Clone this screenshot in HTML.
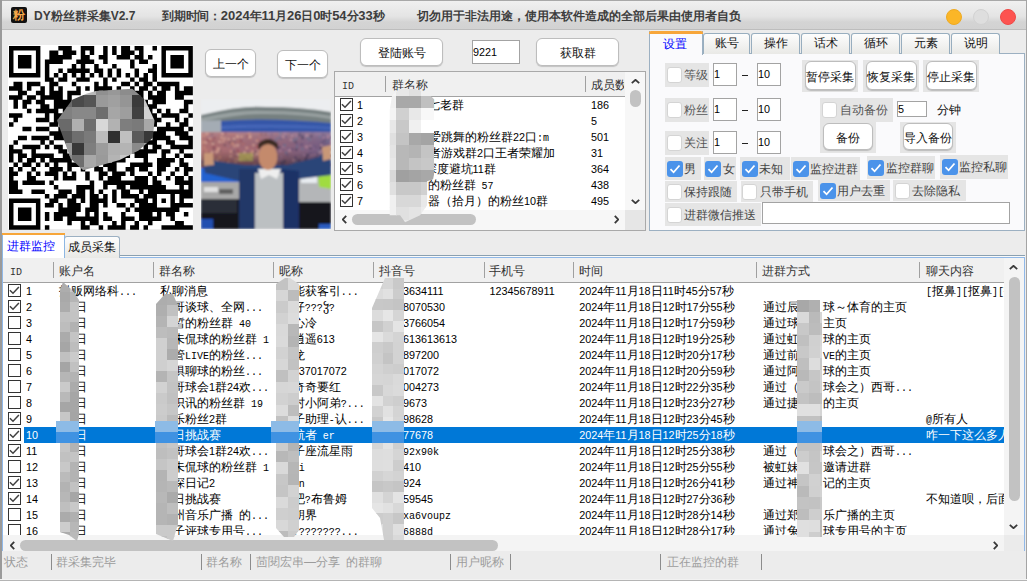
<!DOCTYPE html><html><head><meta charset="utf-8"><style>
*{box-sizing:border-box;margin:0;padding:0}
html,body{width:1027px;height:581px;overflow:hidden}
body{position:relative;background:#ececec;font-family:"Liberation Sans",sans-serif;font-size:12px;color:#000}
.abs{position:absolute}
.t{position:absolute;white-space:nowrap;line-height:16px}
.btn{position:absolute;background:#fff;border:1px solid #bdbdbd;border-radius:6px;box-shadow:0 1px 1px rgba(0,0,0,.18);text-align:center;font-size:12px;color:#111}
.inp{position:absolute;background:#fff;border:1px solid #a3a3a3}
.cb{position:absolute;width:13px;height:13px;border:1px solid #333;background:#fff}
.gb{position:absolute;background:#e5e5e5}
.rcb{position:absolute;width:15px;height:16px;border:1px solid #d4d4d4;border-radius:3px;background:#fff}
.rcbc{position:absolute;width:16px;height:16px;border-radius:3px;background:#4b93ea}
.lbl{position:absolute;white-space:nowrap;font-size:12px;color:#333;line-height:16px}
.tab{position:absolute;border:1px solid #98aebf;border-bottom:none;border-radius:3px 3px 0 0;background:linear-gradient(#fdfdfd,#e9e9e6);text-align:center;font-size:12px;line-height:19px;color:#111}
.hd{position:absolute;white-space:nowrap;font-size:12px;color:#333;line-height:16px}
.sep{position:absolute;width:1px;background:#a0a0a0}
.a{font-size:10.8px}
.m{font-family:'Liberation Mono',monospace;font-size:10px}
.btn{white-space:nowrap}
</style></head><body>
<div class="abs" style="left:0;top:0;width:1027px;height:30px;background:linear-gradient(#f0f0f0,#e4e4e4 55%,#d4d4d4 75%,#d2d2d2);border-top:1px solid #a8a8a8;border-bottom:1px solid #bdbdbd"></div>
<div class="abs" style="left:0;top:0;width:1.5px;height:581px;background:#9a9a9a"></div>
<div class="abs" style="left:1026px;top:0;width:1px;height:581px;background:#a4a4a4"></div>
<div class="abs" style="left:0;top:579px;width:1027px;height:1px;background:#f2f2f2"></div><div class="abs" style="left:0;top:580px;width:1027px;height:1px;background:#b4b4b4"></div>
<div class="abs" style="left:11px;top:7px;width:16px;height:16px;background:#111;border-radius:2px;color:#f5a94a;font-size:12px;font-weight:bold;line-height:16px;text-align:center">粉</div>
<div class="t" style="left:34px;top:8px;font-size:12px;font-weight:bold;color:#3d3d3d">DY粉丝群采集V2.7</div>
<div class="t" style="left:162px;top:8px;font-size:12px;letter-spacing:-0.25px;font-weight:bold;color:#3d3d3d">到期时间：<span style="font-size:13px;letter-spacing:0">2024</span>年<span style="font-size:13px;letter-spacing:0">11</span>月<span style="font-size:13px;letter-spacing:0">26</span>日<span style="font-size:13px;letter-spacing:0">0</span>时<span style="font-size:13px;letter-spacing:0">54</span>分<span style="font-size:13px;letter-spacing:0">33</span>秒</div>
<div class="t" style="left:417px;top:8px;font-size:12px;font-weight:bold;color:#3d3d3d">切勿用于非法用途，使用本软件造成的全部后果由使用者自负</div>
<div class="abs" style="left:946px;top:9px;width:16px;height:16px;border-radius:50%;background:#fbb627;border:1px solid #eeaa22"></div>
<div class="abs" style="left:973px;top:9px;width:16px;height:16px;border-radius:50%;background:#dedede;border:1px solid #d2d2d2"></div>
<div class="abs" style="left:1000px;top:9px;width:16px;height:16px;border-radius:50%;background:#fd5350;border:1px solid #ef4a47"></div>
<div class="abs" style="left:7.5px;top:44.8px;width:185.5px;height:184.5px;background:#fff"></div>
<svg class="abs" style="left:8.96px;top:46.06px" width="183.844" height="183.844" viewBox="0 0 41 41"><path d="M0 0h1v1h-1zM1 0h1v1h-1zM2 0h1v1h-1zM3 0h1v1h-1zM4 0h1v1h-1zM5 0h1v1h-1zM6 0h1v1h-1zM11 0h1v1h-1zM12 0h1v1h-1zM13 0h1v1h-1zM16 0h1v1h-1zM17 0h1v1h-1zM18 0h1v1h-1zM21 0h1v1h-1zM23 0h1v1h-1zM25 0h1v1h-1zM26 0h1v1h-1zM28 0h1v1h-1zM29 0h1v1h-1zM32 0h1v1h-1zM34 0h1v1h-1zM35 0h1v1h-1zM36 0h1v1h-1zM37 0h1v1h-1zM38 0h1v1h-1zM39 0h1v1h-1zM40 0h1v1h-1zM0 1h1v1h-1zM6 1h1v1h-1zM9 1h1v1h-1zM10 1h1v1h-1zM12 1h1v1h-1zM13 1h1v1h-1zM14 1h1v1h-1zM16 1h1v1h-1zM18 1h1v1h-1zM21 1h1v1h-1zM23 1h1v1h-1zM25 1h1v1h-1zM26 1h1v1h-1zM27 1h1v1h-1zM29 1h1v1h-1zM34 1h1v1h-1zM40 1h1v1h-1zM0 2h1v1h-1zM2 2h1v1h-1zM3 2h1v1h-1zM4 2h1v1h-1zM6 2h1v1h-1zM9 2h1v1h-1zM10 2h1v1h-1zM11 2h1v1h-1zM12 2h1v1h-1zM13 2h1v1h-1zM16 2h1v1h-1zM17 2h1v1h-1zM20 2h1v1h-1zM21 2h1v1h-1zM24 2h1v1h-1zM25 2h1v1h-1zM26 2h1v1h-1zM28 2h1v1h-1zM29 2h1v1h-1zM31 2h1v1h-1zM34 2h1v1h-1zM36 2h1v1h-1zM37 2h1v1h-1zM38 2h1v1h-1zM40 2h1v1h-1zM0 3h1v1h-1zM2 3h1v1h-1zM3 3h1v1h-1zM4 3h1v1h-1zM6 3h1v1h-1zM8 3h1v1h-1zM9 3h1v1h-1zM10 3h1v1h-1zM11 3h1v1h-1zM15 3h1v1h-1zM16 3h1v1h-1zM17 3h1v1h-1zM18 3h1v1h-1zM21 3h1v1h-1zM27 3h1v1h-1zM29 3h1v1h-1zM30 3h1v1h-1zM34 3h1v1h-1zM36 3h1v1h-1zM37 3h1v1h-1zM38 3h1v1h-1zM40 3h1v1h-1zM0 4h1v1h-1zM2 4h1v1h-1zM3 4h1v1h-1zM4 4h1v1h-1zM6 4h1v1h-1zM8 4h1v1h-1zM14 4h1v1h-1zM16 4h1v1h-1zM19 4h1v1h-1zM23 4h1v1h-1zM27 4h1v1h-1zM32 4h1v1h-1zM34 4h1v1h-1zM36 4h1v1h-1zM37 4h1v1h-1zM38 4h1v1h-1zM40 4h1v1h-1zM0 5h1v1h-1zM6 5h1v1h-1zM8 5h1v1h-1zM11 5h1v1h-1zM13 5h1v1h-1zM14 5h1v1h-1zM15 5h1v1h-1zM16 5h1v1h-1zM17 5h1v1h-1zM19 5h1v1h-1zM20 5h1v1h-1zM22 5h1v1h-1zM24 5h1v1h-1zM28 5h1v1h-1zM31 5h1v1h-1zM32 5h1v1h-1zM34 5h1v1h-1zM40 5h1v1h-1zM0 6h1v1h-1zM1 6h1v1h-1zM2 6h1v1h-1zM3 6h1v1h-1zM4 6h1v1h-1zM5 6h1v1h-1zM6 6h1v1h-1zM8 6h1v1h-1zM10 6h1v1h-1zM12 6h1v1h-1zM14 6h1v1h-1zM16 6h1v1h-1zM18 6h1v1h-1zM20 6h1v1h-1zM22 6h1v1h-1zM24 6h1v1h-1zM26 6h1v1h-1zM28 6h1v1h-1zM30 6h1v1h-1zM32 6h1v1h-1zM34 6h1v1h-1zM35 6h1v1h-1zM36 6h1v1h-1zM37 6h1v1h-1zM38 6h1v1h-1zM39 6h1v1h-1zM40 6h1v1h-1zM8 7h1v1h-1zM9 7h1v1h-1zM11 7h1v1h-1zM12 7h1v1h-1zM15 7h1v1h-1zM16 7h1v1h-1zM17 7h1v1h-1zM21 7h1v1h-1zM23 7h1v1h-1zM27 7h1v1h-1zM29 7h1v1h-1zM30 7h1v1h-1zM32 7h1v1h-1zM1 8h1v1h-1zM2 8h1v1h-1zM4 8h1v1h-1zM5 8h1v1h-1zM6 8h1v1h-1zM9 8h1v1h-1zM10 8h1v1h-1zM14 8h1v1h-1zM19 8h1v1h-1zM21 8h1v1h-1zM25 8h1v1h-1zM26 8h1v1h-1zM28 8h1v1h-1zM30 8h1v1h-1zM31 8h1v1h-1zM33 8h1v1h-1zM34 8h1v1h-1zM35 8h1v1h-1zM36 8h1v1h-1zM37 8h1v1h-1zM0 9h1v1h-1zM1 9h1v1h-1zM2 9h1v1h-1zM4 9h1v1h-1zM7 9h1v1h-1zM9 9h1v1h-1zM11 9h1v1h-1zM15 9h1v1h-1zM17 9h1v1h-1zM19 9h1v1h-1zM20 9h1v1h-1zM21 9h1v1h-1zM22 9h1v1h-1zM24 9h1v1h-1zM27 9h1v1h-1zM29 9h1v1h-1zM30 9h1v1h-1zM32 9h1v1h-1zM34 9h1v1h-1zM35 9h1v1h-1zM37 9h1v1h-1zM39 9h1v1h-1zM40 9h1v1h-1zM2 10h1v1h-1zM3 10h1v1h-1zM6 10h1v1h-1zM7 10h1v1h-1zM9 10h1v1h-1zM10 10h1v1h-1zM11 10h1v1h-1zM13 10h1v1h-1zM14 10h1v1h-1zM15 10h1v1h-1zM19 10h1v1h-1zM21 10h1v1h-1zM25 10h1v1h-1zM26 10h1v1h-1zM27 10h1v1h-1zM28 10h1v1h-1zM29 10h1v1h-1zM31 10h1v1h-1zM33 10h1v1h-1zM34 10h1v1h-1zM37 10h1v1h-1zM38 10h1v1h-1zM39 10h1v1h-1zM40 10h1v1h-1zM0 11h1v1h-1zM1 11h1v1h-1zM2 11h1v1h-1zM4 11h1v1h-1zM5 11h1v1h-1zM7 11h1v1h-1zM8 11h1v1h-1zM9 11h1v1h-1zM10 11h1v1h-1zM11 11h1v1h-1zM13 11h1v1h-1zM17 11h1v1h-1zM19 11h1v1h-1zM21 11h1v1h-1zM24 11h1v1h-1zM25 11h1v1h-1zM26 11h1v1h-1zM27 11h1v1h-1zM28 11h1v1h-1zM29 11h1v1h-1zM31 11h1v1h-1zM32 11h1v1h-1zM33 11h1v1h-1zM34 11h1v1h-1zM37 11h1v1h-1zM38 11h1v1h-1zM1 12h1v1h-1zM3 12h1v1h-1zM4 12h1v1h-1zM6 12h1v1h-1zM7 12h1v1h-1zM10 12h1v1h-1zM11 12h1v1h-1zM12 12h1v1h-1zM13 12h1v1h-1zM15 12h1v1h-1zM17 12h1v1h-1zM18 12h1v1h-1zM19 12h1v1h-1zM20 12h1v1h-1zM21 12h1v1h-1zM22 12h1v1h-1zM23 12h1v1h-1zM24 12h1v1h-1zM25 12h1v1h-1zM26 12h1v1h-1zM28 12h1v1h-1zM29 12h1v1h-1zM30 12h1v1h-1zM32 12h1v1h-1zM33 12h1v1h-1zM34 12h1v1h-1zM39 12h1v1h-1zM40 12h1v1h-1zM1 13h1v1h-1zM3 13h1v1h-1zM7 13h1v1h-1zM8 13h1v1h-1zM10 13h1v1h-1zM11 13h1v1h-1zM12 13h1v1h-1zM13 13h1v1h-1zM16 13h1v1h-1zM17 13h1v1h-1zM18 13h1v1h-1zM19 13h1v1h-1zM20 13h1v1h-1zM21 13h1v1h-1zM23 13h1v1h-1zM24 13h1v1h-1zM26 13h1v1h-1zM27 13h1v1h-1zM28 13h1v1h-1zM29 13h1v1h-1zM30 13h1v1h-1zM31 13h1v1h-1zM32 13h1v1h-1zM39 13h1v1h-1zM4 14h1v1h-1zM6 14h1v1h-1zM7 14h1v1h-1zM8 14h1v1h-1zM9 14h1v1h-1zM10 14h1v1h-1zM12 14h1v1h-1zM13 14h1v1h-1zM16 14h1v1h-1zM17 14h1v1h-1zM18 14h1v1h-1zM19 14h1v1h-1zM23 14h1v1h-1zM24 14h1v1h-1zM25 14h1v1h-1zM26 14h1v1h-1zM27 14h1v1h-1zM31 14h1v1h-1zM33 14h1v1h-1zM35 14h1v1h-1zM38 14h1v1h-1zM39 14h1v1h-1zM0 15h1v1h-1zM1 15h1v1h-1zM2 15h1v1h-1zM8 15h1v1h-1zM10 15h1v1h-1zM11 15h1v1h-1zM13 15h1v1h-1zM15 15h1v1h-1zM17 15h1v1h-1zM18 15h1v1h-1zM19 15h1v1h-1zM20 15h1v1h-1zM22 15h1v1h-1zM24 15h1v1h-1zM25 15h1v1h-1zM26 15h1v1h-1zM31 15h1v1h-1zM32 15h1v1h-1zM34 15h1v1h-1zM35 15h1v1h-1zM36 15h1v1h-1zM37 15h1v1h-1zM40 15h1v1h-1zM1 16h1v1h-1zM6 16h1v1h-1zM7 16h1v1h-1zM8 16h1v1h-1zM10 16h1v1h-1zM11 16h1v1h-1zM12 16h1v1h-1zM13 16h1v1h-1zM14 16h1v1h-1zM15 16h1v1h-1zM16 16h1v1h-1zM18 16h1v1h-1zM26 16h1v1h-1zM30 16h1v1h-1zM31 16h1v1h-1zM32 16h1v1h-1zM33 16h1v1h-1zM37 16h1v1h-1zM39 16h1v1h-1zM0 17h1v1h-1zM9 17h1v1h-1zM10 17h1v1h-1zM12 17h1v1h-1zM15 17h1v1h-1zM16 17h1v1h-1zM17 17h1v1h-1zM18 17h1v1h-1zM23 17h1v1h-1zM24 17h1v1h-1zM28 17h1v1h-1zM30 17h1v1h-1zM31 17h1v1h-1zM32 17h1v1h-1zM35 17h1v1h-1zM38 17h1v1h-1zM39 17h1v1h-1zM3 18h1v1h-1zM4 18h1v1h-1zM6 18h1v1h-1zM7 18h1v1h-1zM8 18h1v1h-1zM11 18h1v1h-1zM12 18h1v1h-1zM13 18h1v1h-1zM16 18h1v1h-1zM17 18h1v1h-1zM22 18h1v1h-1zM23 18h1v1h-1zM26 18h1v1h-1zM30 18h1v1h-1zM33 18h1v1h-1zM34 18h1v1h-1zM35 18h1v1h-1zM36 18h1v1h-1zM37 18h1v1h-1zM38 18h1v1h-1zM40 18h1v1h-1zM9 19h1v1h-1zM10 19h1v1h-1zM11 19h1v1h-1zM12 19h1v1h-1zM13 19h1v1h-1zM14 19h1v1h-1zM17 19h1v1h-1zM18 19h1v1h-1zM20 19h1v1h-1zM21 19h1v1h-1zM23 19h1v1h-1zM25 19h1v1h-1zM28 19h1v1h-1zM31 19h1v1h-1zM32 19h1v1h-1zM33 19h1v1h-1zM34 19h1v1h-1zM37 19h1v1h-1zM38 19h1v1h-1zM39 19h1v1h-1zM2 20h1v1h-1zM3 20h1v1h-1zM5 20h1v1h-1zM6 20h1v1h-1zM7 20h1v1h-1zM8 20h1v1h-1zM10 20h1v1h-1zM11 20h1v1h-1zM12 20h1v1h-1zM13 20h1v1h-1zM16 20h1v1h-1zM18 20h1v1h-1zM19 20h1v1h-1zM21 20h1v1h-1zM23 20h1v1h-1zM24 20h1v1h-1zM25 20h1v1h-1zM26 20h1v1h-1zM27 20h1v1h-1zM28 20h1v1h-1zM29 20h1v1h-1zM30 20h1v1h-1zM32 20h1v1h-1zM33 20h1v1h-1zM34 20h1v1h-1zM35 20h1v1h-1zM38 20h1v1h-1zM39 20h1v1h-1zM40 20h1v1h-1zM1 21h1v1h-1zM7 21h1v1h-1zM9 21h1v1h-1zM13 21h1v1h-1zM17 21h1v1h-1zM19 21h1v1h-1zM22 21h1v1h-1zM23 21h1v1h-1zM24 21h1v1h-1zM25 21h1v1h-1zM26 21h1v1h-1zM28 21h1v1h-1zM29 21h1v1h-1zM30 21h1v1h-1zM31 21h1v1h-1zM32 21h1v1h-1zM35 21h1v1h-1zM36 21h1v1h-1zM40 21h1v1h-1zM0 22h1v1h-1zM3 22h1v1h-1zM4 22h1v1h-1zM5 22h1v1h-1zM6 22h1v1h-1zM8 22h1v1h-1zM10 22h1v1h-1zM11 22h1v1h-1zM14 22h1v1h-1zM15 22h1v1h-1zM17 22h1v1h-1zM18 22h1v1h-1zM19 22h1v1h-1zM22 22h1v1h-1zM24 22h1v1h-1zM27 22h1v1h-1zM28 22h1v1h-1zM30 22h1v1h-1zM32 22h1v1h-1zM33 22h1v1h-1zM36 22h1v1h-1zM37 22h1v1h-1zM38 22h1v1h-1zM39 22h1v1h-1zM40 22h1v1h-1zM0 23h1v1h-1zM1 23h1v1h-1zM2 23h1v1h-1zM5 23h1v1h-1zM11 23h1v1h-1zM12 23h1v1h-1zM14 23h1v1h-1zM15 23h1v1h-1zM18 23h1v1h-1zM20 23h1v1h-1zM23 23h1v1h-1zM24 23h1v1h-1zM25 23h1v1h-1zM27 23h1v1h-1zM28 23h1v1h-1zM29 23h1v1h-1zM30 23h1v1h-1zM31 23h1v1h-1zM32 23h1v1h-1zM34 23h1v1h-1zM35 23h1v1h-1zM38 23h1v1h-1zM0 24h1v1h-1zM2 24h1v1h-1zM3 24h1v1h-1zM5 24h1v1h-1zM6 24h1v1h-1zM7 24h1v1h-1zM8 24h1v1h-1zM9 24h1v1h-1zM12 24h1v1h-1zM13 24h1v1h-1zM15 24h1v1h-1zM17 24h1v1h-1zM19 24h1v1h-1zM23 24h1v1h-1zM25 24h1v1h-1zM26 24h1v1h-1zM28 24h1v1h-1zM29 24h1v1h-1zM30 24h1v1h-1zM34 24h1v1h-1zM37 24h1v1h-1zM39 24h1v1h-1zM40 24h1v1h-1zM0 25h1v1h-1zM2 25h1v1h-1zM4 25h1v1h-1zM5 25h1v1h-1zM7 25h1v1h-1zM9 25h1v1h-1zM10 25h1v1h-1zM11 25h1v1h-1zM12 25h1v1h-1zM13 25h1v1h-1zM16 25h1v1h-1zM17 25h1v1h-1zM18 25h1v1h-1zM20 25h1v1h-1zM23 25h1v1h-1zM24 25h1v1h-1zM25 25h1v1h-1zM30 25h1v1h-1zM33 25h1v1h-1zM34 25h1v1h-1zM35 25h1v1h-1zM36 25h1v1h-1zM38 25h1v1h-1zM1 26h1v1h-1zM3 26h1v1h-1zM4 26h1v1h-1zM6 26h1v1h-1zM8 26h1v1h-1zM10 26h1v1h-1zM13 26h1v1h-1zM14 26h1v1h-1zM15 26h1v1h-1zM16 26h1v1h-1zM17 26h1v1h-1zM19 26h1v1h-1zM21 26h1v1h-1zM22 26h1v1h-1zM23 26h1v1h-1zM27 26h1v1h-1zM28 26h1v1h-1zM29 26h1v1h-1zM30 26h1v1h-1zM31 26h1v1h-1zM33 26h1v1h-1zM34 26h1v1h-1zM35 26h1v1h-1zM38 26h1v1h-1zM39 26h1v1h-1zM0 27h1v1h-1zM2 27h1v1h-1zM5 27h1v1h-1zM9 27h1v1h-1zM10 27h1v1h-1zM11 27h1v1h-1zM13 27h1v1h-1zM16 27h1v1h-1zM19 27h1v1h-1zM20 27h1v1h-1zM22 27h1v1h-1zM23 27h1v1h-1zM26 27h1v1h-1zM27 27h1v1h-1zM29 27h1v1h-1zM30 27h1v1h-1zM33 27h1v1h-1zM34 27h1v1h-1zM37 27h1v1h-1zM39 27h1v1h-1zM40 27h1v1h-1zM0 28h1v1h-1zM1 28h1v1h-1zM4 28h1v1h-1zM6 28h1v1h-1zM8 28h1v1h-1zM9 28h1v1h-1zM10 28h1v1h-1zM12 28h1v1h-1zM14 28h1v1h-1zM17 28h1v1h-1zM20 28h1v1h-1zM21 28h1v1h-1zM23 28h1v1h-1zM24 28h1v1h-1zM25 28h1v1h-1zM27 28h1v1h-1zM31 28h1v1h-1zM33 28h1v1h-1zM36 28h1v1h-1zM39 28h1v1h-1zM0 29h1v1h-1zM4 29h1v1h-1zM5 29h1v1h-1zM10 29h1v1h-1zM12 29h1v1h-1zM13 29h1v1h-1zM14 29h1v1h-1zM17 29h1v1h-1zM20 29h1v1h-1zM22 29h1v1h-1zM23 29h1v1h-1zM24 29h1v1h-1zM28 29h1v1h-1zM29 29h1v1h-1zM30 29h1v1h-1zM32 29h1v1h-1zM35 29h1v1h-1zM37 29h1v1h-1zM38 29h1v1h-1zM40 29h1v1h-1zM0 30h1v1h-1zM1 30h1v1h-1zM3 30h1v1h-1zM4 30h1v1h-1zM5 30h1v1h-1zM6 30h1v1h-1zM7 30h1v1h-1zM9 30h1v1h-1zM18 30h1v1h-1zM21 30h1v1h-1zM22 30h1v1h-1zM23 30h1v1h-1zM24 30h1v1h-1zM25 30h1v1h-1zM26 30h1v1h-1zM27 30h1v1h-1zM28 30h1v1h-1zM29 30h1v1h-1zM30 30h1v1h-1zM32 30h1v1h-1zM33 30h1v1h-1zM37 30h1v1h-1zM38 30h1v1h-1zM39 30h1v1h-1zM40 30h1v1h-1zM0 31h1v1h-1zM1 31h1v1h-1zM10 31h1v1h-1zM15 31h1v1h-1zM16 31h1v1h-1zM17 31h1v1h-1zM18 31h1v1h-1zM21 31h1v1h-1zM24 31h1v1h-1zM25 31h1v1h-1zM27 31h1v1h-1zM28 31h1v1h-1zM29 31h1v1h-1zM30 31h1v1h-1zM31 31h1v1h-1zM32 31h1v1h-1zM33 31h1v1h-1zM34 31h1v1h-1zM38 31h1v1h-1zM40 31h1v1h-1zM0 32h1v1h-1zM1 32h1v1h-1zM2 32h1v1h-1zM5 32h1v1h-1zM6 32h1v1h-1zM7 32h1v1h-1zM11 32h1v1h-1zM12 32h1v1h-1zM13 32h1v1h-1zM15 32h1v1h-1zM16 32h1v1h-1zM18 32h1v1h-1zM20 32h1v1h-1zM23 32h1v1h-1zM25 32h1v1h-1zM26 32h1v1h-1zM29 32h1v1h-1zM31 32h1v1h-1zM32 32h1v1h-1zM33 32h1v1h-1zM34 32h1v1h-1zM35 32h1v1h-1zM36 32h1v1h-1zM37 32h1v1h-1zM38 32h1v1h-1zM39 32h1v1h-1zM40 32h1v1h-1zM8 33h1v1h-1zM10 33h1v1h-1zM11 33h1v1h-1zM12 33h1v1h-1zM14 33h1v1h-1zM15 33h1v1h-1zM16 33h1v1h-1zM18 33h1v1h-1zM19 33h1v1h-1zM21 33h1v1h-1zM23 33h1v1h-1zM25 33h1v1h-1zM26 33h1v1h-1zM27 33h1v1h-1zM28 33h1v1h-1zM30 33h1v1h-1zM31 33h1v1h-1zM32 33h1v1h-1zM36 33h1v1h-1zM38 33h1v1h-1zM39 33h1v1h-1zM40 33h1v1h-1zM0 34h1v1h-1zM1 34h1v1h-1zM2 34h1v1h-1zM3 34h1v1h-1zM4 34h1v1h-1zM5 34h1v1h-1zM6 34h1v1h-1zM9 34h1v1h-1zM10 34h1v1h-1zM13 34h1v1h-1zM14 34h1v1h-1zM16 34h1v1h-1zM18 34h1v1h-1zM19 34h1v1h-1zM20 34h1v1h-1zM21 34h1v1h-1zM23 34h1v1h-1zM28 34h1v1h-1zM29 34h1v1h-1zM30 34h1v1h-1zM32 34h1v1h-1zM34 34h1v1h-1zM36 34h1v1h-1zM38 34h1v1h-1zM0 35h1v1h-1zM6 35h1v1h-1zM8 35h1v1h-1zM9 35h1v1h-1zM11 35h1v1h-1zM13 35h1v1h-1zM14 35h1v1h-1zM15 35h1v1h-1zM18 35h1v1h-1zM19 35h1v1h-1zM21 35h1v1h-1zM24 35h1v1h-1zM25 35h1v1h-1zM27 35h1v1h-1zM29 35h1v1h-1zM30 35h1v1h-1zM31 35h1v1h-1zM32 35h1v1h-1zM36 35h1v1h-1zM37 35h1v1h-1zM38 35h1v1h-1zM39 35h1v1h-1zM40 35h1v1h-1zM0 36h1v1h-1zM2 36h1v1h-1zM3 36h1v1h-1zM4 36h1v1h-1zM6 36h1v1h-1zM11 36h1v1h-1zM12 36h1v1h-1zM13 36h1v1h-1zM14 36h1v1h-1zM15 36h1v1h-1zM17 36h1v1h-1zM18 36h1v1h-1zM19 36h1v1h-1zM26 36h1v1h-1zM28 36h1v1h-1zM29 36h1v1h-1zM30 36h1v1h-1zM31 36h1v1h-1zM32 36h1v1h-1zM33 36h1v1h-1zM34 36h1v1h-1zM35 36h1v1h-1zM36 36h1v1h-1zM37 36h1v1h-1zM0 37h1v1h-1zM2 37h1v1h-1zM3 37h1v1h-1zM4 37h1v1h-1zM6 37h1v1h-1zM8 37h1v1h-1zM10 37h1v1h-1zM11 37h1v1h-1zM12 37h1v1h-1zM13 37h1v1h-1zM14 37h1v1h-1zM17 37h1v1h-1zM19 37h1v1h-1zM21 37h1v1h-1zM25 37h1v1h-1zM29 37h1v1h-1zM30 37h1v1h-1zM31 37h1v1h-1zM33 37h1v1h-1zM35 37h1v1h-1zM36 37h1v1h-1zM39 37h1v1h-1zM0 38h1v1h-1zM2 38h1v1h-1zM3 38h1v1h-1zM4 38h1v1h-1zM6 38h1v1h-1zM8 38h1v1h-1zM10 38h1v1h-1zM11 38h1v1h-1zM13 38h1v1h-1zM14 38h1v1h-1zM15 38h1v1h-1zM16 38h1v1h-1zM17 38h1v1h-1zM18 38h1v1h-1zM19 38h1v1h-1zM21 38h1v1h-1zM22 38h1v1h-1zM25 38h1v1h-1zM26 38h1v1h-1zM27 38h1v1h-1zM29 38h1v1h-1zM30 38h1v1h-1zM31 38h1v1h-1zM32 38h1v1h-1zM33 38h1v1h-1zM36 38h1v1h-1zM0 39h1v1h-1zM6 39h1v1h-1zM13 39h1v1h-1zM16 39h1v1h-1zM18 39h1v1h-1zM19 39h1v1h-1zM23 39h1v1h-1zM25 39h1v1h-1zM28 39h1v1h-1zM31 39h1v1h-1zM37 39h1v1h-1zM38 39h1v1h-1zM0 40h1v1h-1zM1 40h1v1h-1zM2 40h1v1h-1zM3 40h1v1h-1zM4 40h1v1h-1zM5 40h1v1h-1zM6 40h1v1h-1zM8 40h1v1h-1zM16 40h1v1h-1zM17 40h1v1h-1zM20 40h1v1h-1zM22 40h1v1h-1zM23 40h1v1h-1zM24 40h1v1h-1zM25 40h1v1h-1zM27 40h1v1h-1zM28 40h1v1h-1zM30 40h1v1h-1zM34 40h1v1h-1zM35 40h1v1h-1zM36 40h1v1h-1zM37 40h1v1h-1zM38 40h1v1h-1zM39 40h1v1h-1zM40 40h1v1h-1z" fill="#000"/></svg>
<div class="abs" style="left:47.8px;top:83px;width:120px;height:96px;clip-path:polygon(9.3px 37.4px,24.4px 16.8px,38.6px 10.8px,48.1px 8.1px,84.5px 5.7px,97.2px 16.8px,106.7px 37.4px,105.1px 54.8px,90.8px 67.5px,71.8px 77px,49.7px 83.3px,35.4px 87.3px,22.8px 75.4px,14.9px 53.2px)"><div style="position:absolute;left:36px;top:0px;width:12.5px;height:12.5px;background:#b8b8b8"></div><div style="position:absolute;left:48px;top:0px;width:12.5px;height:12.5px;background:#909090"></div><div style="position:absolute;left:60px;top:0px;width:12.5px;height:12.5px;background:#989898"></div><div style="position:absolute;left:72px;top:0px;width:12.5px;height:12.5px;background:#8c8c8c"></div><div style="position:absolute;left:84px;top:0px;width:12.5px;height:12.5px;background:#8a8a8a"></div><div style="position:absolute;left:12px;top:12px;width:12.5px;height:12.5px;background:#6a6a6a"></div><div style="position:absolute;left:24px;top:12px;width:12.5px;height:12.5px;background:#4a4a4a"></div><div style="position:absolute;left:36px;top:12px;width:12.5px;height:12.5px;background:#555555"></div><div style="position:absolute;left:48px;top:12px;width:12.5px;height:12.5px;background:#9a9a9a"></div><div style="position:absolute;left:60px;top:12px;width:12.5px;height:12.5px;background:#a0a0a0"></div><div style="position:absolute;left:72px;top:12px;width:12.5px;height:12.5px;background:#959595"></div><div style="position:absolute;left:84px;top:12px;width:12.5px;height:12.5px;background:#3a3a3a"></div><div style="position:absolute;left:96px;top:12px;width:12.5px;height:12.5px;background:#c8c8c8"></div><div style="position:absolute;left:0px;top:24px;width:12.5px;height:12.5px;background:#808080"></div><div style="position:absolute;left:12px;top:24px;width:12.5px;height:12.5px;background:#808080"></div><div style="position:absolute;left:24px;top:24px;width:12.5px;height:12.5px;background:#888888"></div><div style="position:absolute;left:36px;top:24px;width:12.5px;height:12.5px;background:#888888"></div><div style="position:absolute;left:48px;top:24px;width:12.5px;height:12.5px;background:#6e6e6e"></div><div style="position:absolute;left:60px;top:24px;width:12.5px;height:12.5px;background:#a6a6a6"></div><div style="position:absolute;left:72px;top:24px;width:12.5px;height:12.5px;background:#9e9e9e"></div><div style="position:absolute;left:84px;top:24px;width:12.5px;height:12.5px;background:#404040"></div><div style="position:absolute;left:96px;top:24px;width:12.5px;height:12.5px;background:#d2d2d2"></div><div style="position:absolute;left:0px;top:36px;width:12.5px;height:12.5px;background:#6a6a6a"></div><div style="position:absolute;left:12px;top:36px;width:12.5px;height:12.5px;background:#6a6a6a"></div><div style="position:absolute;left:24px;top:36px;width:12.5px;height:12.5px;background:#b0b0b0"></div><div style="position:absolute;left:36px;top:36px;width:12.5px;height:12.5px;background:#6e6e6e"></div><div style="position:absolute;left:48px;top:36px;width:12.5px;height:12.5px;background:#d8d8d8"></div><div style="position:absolute;left:60px;top:36px;width:12.5px;height:12.5px;background:#b2b2b2"></div><div style="position:absolute;left:72px;top:36px;width:12.5px;height:12.5px;background:#7e7e7e"></div><div style="position:absolute;left:84px;top:36px;width:12.5px;height:12.5px;background:#7a7a7a"></div><div style="position:absolute;left:96px;top:36px;width:12.5px;height:12.5px;background:#a8a8a8"></div><div style="position:absolute;left:0px;top:48px;width:12.5px;height:12.5px;background:#555555"></div><div style="position:absolute;left:12px;top:48px;width:12.5px;height:12.5px;background:#555555"></div><div style="position:absolute;left:24px;top:48px;width:12.5px;height:12.5px;background:#6e6e6e"></div><div style="position:absolute;left:36px;top:48px;width:12.5px;height:12.5px;background:#7a7a7a"></div><div style="position:absolute;left:48px;top:48px;width:12.5px;height:12.5px;background:#bcbcbc"></div><div style="position:absolute;left:60px;top:48px;width:12.5px;height:12.5px;background:#303030"></div><div style="position:absolute;left:72px;top:48px;width:12.5px;height:12.5px;background:#c0c0c0"></div><div style="position:absolute;left:84px;top:48px;width:12.5px;height:12.5px;background:#5a5a5a"></div><div style="position:absolute;left:96px;top:48px;width:12.5px;height:12.5px;background:#383838"></div><div style="position:absolute;left:12px;top:60px;width:12.5px;height:12.5px;background:#9a9a9a"></div><div style="position:absolute;left:24px;top:60px;width:12.5px;height:12.5px;background:#383838"></div><div style="position:absolute;left:36px;top:60px;width:12.5px;height:12.5px;background:#7e7e7e"></div><div style="position:absolute;left:48px;top:60px;width:12.5px;height:12.5px;background:#9c9c9c"></div><div style="position:absolute;left:60px;top:60px;width:12.5px;height:12.5px;background:#b0b0b0"></div><div style="position:absolute;left:72px;top:60px;width:12.5px;height:12.5px;background:#b4b4b4"></div><div style="position:absolute;left:84px;top:60px;width:12.5px;height:12.5px;background:#8a8a8a"></div><div style="position:absolute;left:96px;top:60px;width:12.5px;height:12.5px;background:#a0a0a0"></div><div style="position:absolute;left:12px;top:72px;width:12.5px;height:12.5px;background:#8a8a8a"></div><div style="position:absolute;left:24px;top:72px;width:12.5px;height:12.5px;background:#6e6e6e"></div><div style="position:absolute;left:36px;top:72px;width:12.5px;height:12.5px;background:#a8a8a8"></div><div style="position:absolute;left:48px;top:72px;width:12.5px;height:12.5px;background:#9a9a9a"></div><div style="position:absolute;left:60px;top:72px;width:12.5px;height:12.5px;background:#b4b4b4"></div><div style="position:absolute;left:72px;top:72px;width:12.5px;height:12.5px;background:#c8c8c8"></div><div style="position:absolute;left:24px;top:84px;width:12.5px;height:12.5px;background:#9a9a9a"></div><div style="position:absolute;left:36px;top:84px;width:12.5px;height:12.5px;background:#9a9a9a"></div><div style="position:absolute;left:48px;top:84px;width:12.5px;height:12.5px;background:#a0a0a0"></div></div>
<div class="btn" style="left:205px;top:49px;width:51px;height:28px;line-height:28px">上一个</div>
<div class="btn" style="left:277px;top:50px;width:51px;height:28px;line-height:28px">下一个</div>
<svg class="abs" style="left:201px;top:99px" width="130" height="130" viewBox="0 0 130 130">
<defs><filter id="bl"><feGaussianBlur stdDeviation="0.8"/></filter>
<linearGradient id="cv" x1="0" y1="0" x2="0" y2="1"><stop offset="0" stop-color="#fff" stop-opacity="0.15"/><stop offset="0.5" stop-color="#000" stop-opacity="0"/><stop offset="1" stop-color="#000" stop-opacity="0.45"/></linearGradient>
<linearGradient id="ch" x1="0" y1="0" x2="1" y2="0"><stop offset="0" stop-color="#b07070"/><stop offset="0.5" stop-color="#9a6878"/><stop offset="1" stop-color="#766088"/></linearGradient></defs>
<g filter="url(#bl)">
<rect width="130" height="130" fill="#eceef0"/>
<path d="M0 16 Q40 6 65 8 Q100 8 130 13 L130 28 L0 30 Z" fill="#768080"/>
<path d="M0 19 Q40 10 65 12 Q100 12 130 17 L130 20 Q100 15 65 15 Q40 14 0 23 Z" fill="#9aa2a2"/>
<path d="M0 22 L20 21 L20 34 L0 34 Z" fill="#a4acb4"/>
<path d="M20 22 Q65 18 130 24 L130 34 L20 34 Z" fill="#3556a8"/>
<path d="M20 27 Q65 24 130 28 L130 30 Q65 27 20 30 Z" fill="#5070c0" opacity="0.7"/>
<rect x="0" y="33" width="130" height="36" fill="url(#ch)"/>
<rect x="58.8" y="52.6" width="2.5" height="2.5" fill="#7a5060" opacity="0.75"/><rect x="60.5" y="50.8" width="2.5" height="2.5" fill="#a07080" opacity="0.75"/><rect x="24.7" y="61.1" width="2.5" height="2.5" fill="#904858" opacity="0.75"/><rect x="81.9" y="60.8" width="2.5" height="2.5" fill="#8a6a90" opacity="0.75"/><rect x="58.1" y="38.0" width="2.5" height="2.5" fill="#a07080" opacity="0.75"/><rect x="105.3" y="57.3" width="2.5" height="2.5" fill="#8a6a90" opacity="0.75"/><rect x="77.4" y="46.9" width="2.5" height="2.5" fill="#5a4a70" opacity="0.75"/><rect x="85.0" y="54.5" width="2.5" height="2.5" fill="#705a80" opacity="0.75"/><rect x="81.0" y="62.1" width="2.5" height="2.5" fill="#8a6a90" opacity="0.75"/><rect x="7.7" y="39.7" width="2.5" height="2.5" fill="#b06a68" opacity="0.75"/><rect x="78.0" y="60.2" width="2.5" height="2.5" fill="#a07898" opacity="0.75"/><rect x="57.3" y="62.5" width="2.5" height="2.5" fill="#a07080" opacity="0.75"/><rect x="30.4" y="43.3" width="2.5" height="2.5" fill="#c88878" opacity="0.75"/><rect x="86.1" y="49.0" width="2.5" height="2.5" fill="#a07898" opacity="0.75"/><rect x="52.9" y="52.3" width="2.5" height="2.5" fill="#7a5060" opacity="0.75"/><rect x="10.8" y="41.9" width="2.5" height="2.5" fill="#7a5060" opacity="0.75"/><rect x="29.9" y="43.1" width="2.5" height="2.5" fill="#c88878" opacity="0.75"/><rect x="73.2" y="36.8" width="2.5" height="2.5" fill="#8a6a90" opacity="0.75"/><rect x="110.1" y="46.5" width="2.5" height="2.5" fill="#8a6a90" opacity="0.75"/><rect x="110.2" y="33.0" width="2.5" height="2.5" fill="#705a80" opacity="0.75"/><rect x="120.5" y="34.8" width="2.5" height="2.5" fill="#5a4a70" opacity="0.75"/><rect x="127.4" y="46.9" width="2.5" height="2.5" fill="#8a6a90" opacity="0.75"/><rect x="73.6" y="39.9" width="2.5" height="2.5" fill="#6a7090" opacity="0.75"/><rect x="35.1" y="36.1" width="2.5" height="2.5" fill="#d8a090" opacity="0.75"/><rect x="2.0" y="47.4" width="2.5" height="2.5" fill="#c88878" opacity="0.75"/><rect x="17.5" y="57.7" width="2.5" height="2.5" fill="#c88878" opacity="0.75"/><rect x="7.8" y="60.9" width="2.5" height="2.5" fill="#b06a68" opacity="0.75"/><rect x="88.7" y="39.6" width="2.5" height="2.5" fill="#c090a0" opacity="0.75"/><rect x="24.8" y="58.6" width="2.5" height="2.5" fill="#b06a68" opacity="0.75"/><rect x="54.5" y="46.4" width="2.5" height="2.5" fill="#904858" opacity="0.75"/><rect x="54.7" y="40.5" width="2.5" height="2.5" fill="#d8a090" opacity="0.75"/><rect x="112.4" y="67.1" width="2.5" height="2.5" fill="#c090a0" opacity="0.75"/><rect x="39.5" y="64.0" width="2.5" height="2.5" fill="#b06a68" opacity="0.75"/><rect x="24.3" y="67.9" width="2.5" height="2.5" fill="#a07080" opacity="0.75"/><rect x="83.4" y="36.5" width="2.5" height="2.5" fill="#705a80" opacity="0.75"/><rect x="27.7" y="42.0" width="2.5" height="2.5" fill="#7a5060" opacity="0.75"/><rect x="79.3" y="62.1" width="2.5" height="2.5" fill="#5a4a70" opacity="0.75"/><rect x="9.5" y="36.2" width="2.5" height="2.5" fill="#a07080" opacity="0.75"/><rect x="82.8" y="33.5" width="2.5" height="2.5" fill="#a07898" opacity="0.75"/><rect x="48.3" y="48.9" width="2.5" height="2.5" fill="#a07080" opacity="0.75"/><rect x="62.9" y="53.1" width="2.5" height="2.5" fill="#7a5060" opacity="0.75"/><rect x="50.2" y="55.0" width="2.5" height="2.5" fill="#d8a090" opacity="0.75"/><rect x="118.1" y="61.6" width="2.5" height="2.5" fill="#705a80" opacity="0.75"/><rect x="94.3" y="38.5" width="2.5" height="2.5" fill="#6a7090" opacity="0.75"/><rect x="122.3" y="39.9" width="2.5" height="2.5" fill="#5a4a70" opacity="0.75"/><rect x="114.7" y="54.1" width="2.5" height="2.5" fill="#5a4a70" opacity="0.75"/><rect x="6.2" y="36.8" width="2.5" height="2.5" fill="#a07080" opacity="0.75"/><rect x="125.1" y="41.3" width="2.5" height="2.5" fill="#6a7090" opacity="0.75"/><rect x="50.9" y="47.7" width="2.5" height="2.5" fill="#a07080" opacity="0.75"/><rect x="63.8" y="51.2" width="2.5" height="2.5" fill="#e0b0a0" opacity="0.75"/><rect x="127.0" y="37.4" width="2.5" height="2.5" fill="#5a4a70" opacity="0.75"/><rect x="72.7" y="62.8" width="2.5" height="2.5" fill="#c090a0" opacity="0.75"/><rect x="9.6" y="40.4" width="2.5" height="2.5" fill="#b06a68" opacity="0.75"/><rect x="97.4" y="35.4" width="2.5" height="2.5" fill="#5a4a70" opacity="0.75"/><rect x="57.9" y="35.1" width="2.5" height="2.5" fill="#b06a68" opacity="0.75"/><rect x="36.7" y="51.6" width="2.5" height="2.5" fill="#b06a68" opacity="0.75"/><rect x="12.0" y="37.8" width="2.5" height="2.5" fill="#904858" opacity="0.75"/><rect x="127.5" y="56.0" width="2.5" height="2.5" fill="#6a7090" opacity="0.75"/><rect x="67.9" y="66.1" width="2.5" height="2.5" fill="#c090a0" opacity="0.75"/><rect x="4.6" y="33.6" width="2.5" height="2.5" fill="#d8a090" opacity="0.75"/><rect x="91.1" y="66.7" width="2.5" height="2.5" fill="#8a6a90" opacity="0.75"/><rect x="77.8" y="35.6" width="2.5" height="2.5" fill="#8a6a90" opacity="0.75"/><rect x="95.0" y="44.2" width="2.5" height="2.5" fill="#8a6a90" opacity="0.75"/><rect x="9.8" y="52.1" width="2.5" height="2.5" fill="#e0b0a0" opacity="0.75"/><rect x="5.8" y="65.8" width="2.5" height="2.5" fill="#e0b0a0" opacity="0.75"/><rect x="91.5" y="60.8" width="2.5" height="2.5" fill="#a07898" opacity="0.75"/><rect x="45.7" y="57.0" width="2.5" height="2.5" fill="#c88878" opacity="0.75"/><rect x="113.2" y="47.6" width="2.5" height="2.5" fill="#483c5c" opacity="0.75"/><rect x="3.9" y="50.5" width="2.5" height="2.5" fill="#c88878" opacity="0.75"/><rect x="81.2" y="46.4" width="2.5" height="2.5" fill="#c090a0" opacity="0.75"/><rect x="1.6" y="35.5" width="2.5" height="2.5" fill="#c88878" opacity="0.75"/><rect x="83.1" y="67.8" width="2.5" height="2.5" fill="#5a4a70" opacity="0.75"/><rect x="94.7" y="46.6" width="2.5" height="2.5" fill="#6a7090" opacity="0.75"/><rect x="90.2" y="49.0" width="2.5" height="2.5" fill="#5a4a70" opacity="0.75"/><rect x="109.0" y="35.9" width="2.5" height="2.5" fill="#483c5c" opacity="0.75"/><rect x="66.9" y="43.9" width="2.5" height="2.5" fill="#8a6a90" opacity="0.75"/><rect x="62.5" y="41.1" width="2.5" height="2.5" fill="#e0b0a0" opacity="0.75"/><rect x="14.7" y="60.3" width="2.5" height="2.5" fill="#e0b0a0" opacity="0.75"/><rect x="119.7" y="42.0" width="2.5" height="2.5" fill="#8a6a90" opacity="0.75"/><rect x="47.8" y="38.0" width="2.5" height="2.5" fill="#a07080" opacity="0.75"/><rect x="26.3" y="38.9" width="2.5" height="2.5" fill="#d8a090" opacity="0.75"/><rect x="85.8" y="48.5" width="2.5" height="2.5" fill="#705a80" opacity="0.75"/><rect x="42.5" y="56.3" width="2.5" height="2.5" fill="#b06a68" opacity="0.75"/><rect x="82.4" y="61.1" width="2.5" height="2.5" fill="#483c5c" opacity="0.75"/><rect x="118.8" y="63.8" width="2.5" height="2.5" fill="#5a4a70" opacity="0.75"/><rect x="28.5" y="65.2" width="2.5" height="2.5" fill="#b06a68" opacity="0.75"/><rect x="17.7" y="50.4" width="2.5" height="2.5" fill="#7a5060" opacity="0.75"/><rect x="116.4" y="34.4" width="2.5" height="2.5" fill="#8a6a90" opacity="0.75"/><rect x="123.5" y="42.7" width="2.5" height="2.5" fill="#705a80" opacity="0.75"/><rect x="14.7" y="49.5" width="2.5" height="2.5" fill="#b06a68" opacity="0.75"/><rect x="108.0" y="46.4" width="2.5" height="2.5" fill="#c090a0" opacity="0.75"/><rect x="64.2" y="44.0" width="2.5" height="2.5" fill="#7a5060" opacity="0.75"/><rect x="109.4" y="54.9" width="2.5" height="2.5" fill="#a07898" opacity="0.75"/><rect x="9.7" y="34.1" width="2.5" height="2.5" fill="#7a5060" opacity="0.75"/><rect x="79.0" y="56.7" width="2.5" height="2.5" fill="#a07898" opacity="0.75"/><rect x="74.2" y="43.8" width="2.5" height="2.5" fill="#483c5c" opacity="0.75"/><rect x="73.3" y="55.4" width="2.5" height="2.5" fill="#5a4a70" opacity="0.75"/><rect x="59.1" y="33.9" width="2.5" height="2.5" fill="#7a5060" opacity="0.75"/><rect x="34.6" y="60.3" width="2.5" height="2.5" fill="#7a5060" opacity="0.75"/><rect x="6.1" y="55.0" width="2.5" height="2.5" fill="#904858" opacity="0.75"/><rect x="14.2" y="51.7" width="2.5" height="2.5" fill="#e0b0a0" opacity="0.75"/><rect x="105.0" y="66.5" width="2.5" height="2.5" fill="#6a7090" opacity="0.75"/><rect x="25.7" y="61.8" width="2.5" height="2.5" fill="#d8a090" opacity="0.75"/><rect x="23.2" y="33.4" width="2.5" height="2.5" fill="#904858" opacity="0.75"/><rect x="69.5" y="34.3" width="2.5" height="2.5" fill="#705a80" opacity="0.75"/><rect x="35.4" y="45.1" width="2.5" height="2.5" fill="#e0b0a0" opacity="0.75"/><rect x="123.1" y="50.5" width="2.5" height="2.5" fill="#483c5c" opacity="0.75"/><rect x="20.7" y="62.7" width="2.5" height="2.5" fill="#e0b0a0" opacity="0.75"/><rect x="117.8" y="36.1" width="2.5" height="2.5" fill="#6a7090" opacity="0.75"/><rect x="50.4" y="48.8" width="2.5" height="2.5" fill="#b06a68" opacity="0.75"/><rect x="81.3" y="64.8" width="2.5" height="2.5" fill="#5a4a70" opacity="0.75"/><rect x="71.5" y="55.8" width="2.5" height="2.5" fill="#c090a0" opacity="0.75"/><rect x="103.6" y="66.0" width="2.5" height="2.5" fill="#5a4a70" opacity="0.75"/><rect x="42.4" y="67.4" width="2.5" height="2.5" fill="#c88878" opacity="0.75"/><rect x="93.9" y="61.6" width="2.5" height="2.5" fill="#6a7090" opacity="0.75"/><rect x="120.1" y="37.3" width="2.5" height="2.5" fill="#705a80" opacity="0.75"/><rect x="117.0" y="67.3" width="2.5" height="2.5" fill="#a07898" opacity="0.75"/><rect x="69.8" y="60.7" width="2.5" height="2.5" fill="#a07898" opacity="0.75"/><rect x="34.0" y="58.1" width="2.5" height="2.5" fill="#c88878" opacity="0.75"/><rect x="45.3" y="35.9" width="2.5" height="2.5" fill="#904858" opacity="0.75"/><rect x="44.5" y="47.7" width="2.5" height="2.5" fill="#d8a090" opacity="0.75"/><rect x="63.4" y="34.0" width="2.5" height="2.5" fill="#7a5060" opacity="0.75"/><rect x="112.8" y="48.0" width="2.5" height="2.5" fill="#8a6a90" opacity="0.75"/><rect x="22.5" y="44.7" width="2.5" height="2.5" fill="#7a5060" opacity="0.75"/><rect x="119.1" y="49.5" width="2.5" height="2.5" fill="#c090a0" opacity="0.75"/><rect x="117.1" y="51.1" width="2.5" height="2.5" fill="#6a7090" opacity="0.75"/><rect x="89.6" y="66.1" width="2.5" height="2.5" fill="#5a4a70" opacity="0.75"/><rect x="75.3" y="57.1" width="2.5" height="2.5" fill="#483c5c" opacity="0.75"/><rect x="28.8" y="51.4" width="2.5" height="2.5" fill="#d8a090" opacity="0.75"/><rect x="108.1" y="52.7" width="2.5" height="2.5" fill="#705a80" opacity="0.75"/><rect x="68.0" y="62.5" width="2.5" height="2.5" fill="#c090a0" opacity="0.75"/><rect x="33.3" y="56.5" width="2.5" height="2.5" fill="#7a5060" opacity="0.75"/><rect x="113.1" y="54.3" width="2.5" height="2.5" fill="#a07898" opacity="0.75"/><rect x="110.6" y="66.9" width="2.5" height="2.5" fill="#c090a0" opacity="0.75"/><rect x="35.5" y="50.4" width="2.5" height="2.5" fill="#904858" opacity="0.75"/><rect x="69.7" y="50.6" width="2.5" height="2.5" fill="#c090a0" opacity="0.75"/><rect x="49.0" y="51.8" width="2.5" height="2.5" fill="#c88878" opacity="0.75"/><rect x="67.1" y="47.0" width="2.5" height="2.5" fill="#483c5c" opacity="0.75"/><rect x="128.6" y="37.3" width="2.5" height="2.5" fill="#8a6a90" opacity="0.75"/><rect x="89.8" y="35.3" width="2.5" height="2.5" fill="#c090a0" opacity="0.75"/><rect x="59.7" y="65.2" width="2.5" height="2.5" fill="#7a5060" opacity="0.75"/><rect x="120.0" y="42.4" width="2.5" height="2.5" fill="#5a4a70" opacity="0.75"/><rect x="64.1" y="44.9" width="2.5" height="2.5" fill="#7a5060" opacity="0.75"/><rect x="121.6" y="65.2" width="2.5" height="2.5" fill="#c090a0" opacity="0.75"/><rect x="41.2" y="39.7" width="2.5" height="2.5" fill="#a07080" opacity="0.75"/><rect x="3.8" y="42.1" width="2.5" height="2.5" fill="#e0b0a0" opacity="0.75"/><rect x="101.3" y="33.8" width="2.5" height="2.5" fill="#705a80" opacity="0.75"/><rect x="20.2" y="33.4" width="2.5" height="2.5" fill="#d8a090" opacity="0.75"/><rect x="41.9" y="45.4" width="2.5" height="2.5" fill="#a07080" opacity="0.75"/><rect x="64.8" y="50.5" width="2.5" height="2.5" fill="#a07080" opacity="0.75"/><rect x="16.0" y="50.9" width="2.5" height="2.5" fill="#d8a090" opacity="0.75"/><rect x="93.3" y="57.5" width="2.5" height="2.5" fill="#5a4a70" opacity="0.75"/><rect x="3.0" y="55.2" width="2.5" height="2.5" fill="#7a5060" opacity="0.75"/><rect x="68.8" y="38.6" width="2.5" height="2.5" fill="#705a80" opacity="0.75"/><rect x="112.3" y="51.7" width="2.5" height="2.5" fill="#705a80" opacity="0.75"/><rect x="68.9" y="62.8" width="2.5" height="2.5" fill="#c090a0" opacity="0.75"/><rect x="76.3" y="37.8" width="2.5" height="2.5" fill="#6a7090" opacity="0.75"/><rect x="81.6" y="45.2" width="2.5" height="2.5" fill="#705a80" opacity="0.75"/><rect x="41.1" y="44.0" width="2.5" height="2.5" fill="#b06a68" opacity="0.75"/><rect x="28.4" y="67.9" width="2.5" height="2.5" fill="#c88878" opacity="0.75"/><rect x="17.4" y="41.4" width="2.5" height="2.5" fill="#e0b0a0" opacity="0.75"/><rect x="11.5" y="46.6" width="2.5" height="2.5" fill="#904858" opacity="0.75"/><rect x="108.2" y="47.8" width="2.5" height="2.5" fill="#483c5c" opacity="0.75"/><rect x="91.6" y="40.0" width="2.5" height="2.5" fill="#6a7090" opacity="0.75"/><rect x="89.1" y="33.6" width="2.5" height="2.5" fill="#705a80" opacity="0.75"/><rect x="74.1" y="45.5" width="2.5" height="2.5" fill="#483c5c" opacity="0.75"/><rect x="125.9" y="37.0" width="2.5" height="2.5" fill="#c090a0" opacity="0.75"/><rect x="82.5" y="45.0" width="2.5" height="2.5" fill="#6a7090" opacity="0.75"/><rect x="108.3" y="61.1" width="2.5" height="2.5" fill="#5a4a70" opacity="0.75"/><rect x="13.8" y="34.3" width="2.5" height="2.5" fill="#a07080" opacity="0.75"/><rect x="79.7" y="64.7" width="2.5" height="2.5" fill="#5a4a70" opacity="0.75"/><rect x="19.1" y="39.5" width="2.5" height="2.5" fill="#b06a68" opacity="0.75"/><rect x="22.4" y="38.5" width="2.5" height="2.5" fill="#d8a090" opacity="0.75"/><rect x="120.5" y="36.3" width="2.5" height="2.5" fill="#8a6a90" opacity="0.75"/><rect x="17.5" y="56.8" width="2.5" height="2.5" fill="#c88878" opacity="0.75"/><rect x="99.4" y="44.4" width="2.5" height="2.5" fill="#5a4a70" opacity="0.75"/><rect x="55.4" y="45.4" width="2.5" height="2.5" fill="#b06a68" opacity="0.75"/><rect x="78.1" y="33.5" width="2.5" height="2.5" fill="#6a7090" opacity="0.75"/><rect x="5.3" y="40.0" width="2.5" height="2.5" fill="#904858" opacity="0.75"/><rect x="59.0" y="58.9" width="2.5" height="2.5" fill="#904858" opacity="0.75"/><rect x="119.8" y="54.2" width="2.5" height="2.5" fill="#8a6a90" opacity="0.75"/><rect x="66.6" y="33.5" width="2.5" height="2.5" fill="#8a6a90" opacity="0.75"/><rect x="104.2" y="57.7" width="2.5" height="2.5" fill="#483c5c" opacity="0.75"/><rect x="118.1" y="65.9" width="2.5" height="2.5" fill="#c090a0" opacity="0.75"/><rect x="77.9" y="50.7" width="2.5" height="2.5" fill="#a07898" opacity="0.75"/><rect x="104.6" y="42.0" width="2.5" height="2.5" fill="#8a6a90" opacity="0.75"/><rect x="96.8" y="60.2" width="2.5" height="2.5" fill="#483c5c" opacity="0.75"/><rect x="121.4" y="37.7" width="2.5" height="2.5" fill="#a07898" opacity="0.75"/><rect x="114.4" y="57.3" width="2.5" height="2.5" fill="#483c5c" opacity="0.75"/><rect x="56.1" y="39.4" width="2.5" height="2.5" fill="#b06a68" opacity="0.75"/><rect x="93.9" y="35.5" width="2.5" height="2.5" fill="#a07898" opacity="0.75"/><rect x="39.2" y="36.5" width="2.5" height="2.5" fill="#d8a090" opacity="0.75"/><rect x="128.8" y="64.6" width="2.5" height="2.5" fill="#8a6a90" opacity="0.75"/><rect x="30.2" y="66.1" width="2.5" height="2.5" fill="#e0b0a0" opacity="0.75"/><rect x="38.9" y="40.6" width="2.5" height="2.5" fill="#904858" opacity="0.75"/><rect x="74.0" y="51.7" width="2.5" height="2.5" fill="#5a4a70" opacity="0.75"/><rect x="66.9" y="50.4" width="2.5" height="2.5" fill="#705a80" opacity="0.75"/><rect x="91.2" y="59.7" width="2.5" height="2.5" fill="#c090a0" opacity="0.75"/><rect x="3.0" y="54.5" width="2.5" height="2.5" fill="#e0b0a0" opacity="0.75"/><rect x="30.8" y="48.5" width="2.5" height="2.5" fill="#a07080" opacity="0.75"/><rect x="6.6" y="39.8" width="2.5" height="2.5" fill="#904858" opacity="0.75"/><rect x="1.4" y="42.0" width="2.5" height="2.5" fill="#d8a090" opacity="0.75"/><rect x="117.7" y="52.3" width="2.5" height="2.5" fill="#c090a0" opacity="0.75"/><rect x="54.0" y="51.2" width="2.5" height="2.5" fill="#7a5060" opacity="0.75"/><rect x="129.4" y="55.3" width="2.5" height="2.5" fill="#483c5c" opacity="0.75"/><rect x="83.8" y="52.2" width="2.5" height="2.5" fill="#6a7090" opacity="0.75"/><rect x="98.7" y="34.6" width="2.5" height="2.5" fill="#705a80" opacity="0.75"/><rect x="50.2" y="67.0" width="2.5" height="2.5" fill="#7a5060" opacity="0.75"/><rect x="64.4" y="54.4" width="2.5" height="2.5" fill="#c88878" opacity="0.75"/><rect x="55.8" y="50.3" width="2.5" height="2.5" fill="#d8a090" opacity="0.75"/><rect x="68.5" y="53.9" width="2.5" height="2.5" fill="#a07898" opacity="0.75"/><rect x="69.0" y="49.9" width="2.5" height="2.5" fill="#a07898" opacity="0.75"/><rect x="72.9" y="42.9" width="2.5" height="2.5" fill="#6a7090" opacity="0.75"/><rect x="97.2" y="33.9" width="2.5" height="2.5" fill="#483c5c" opacity="0.75"/><rect x="31.9" y="34.5" width="2.5" height="2.5" fill="#b06a68" opacity="0.75"/><rect x="53.1" y="57.0" width="2.5" height="2.5" fill="#c88878" opacity="0.75"/><rect x="116.7" y="59.2" width="2.5" height="2.5" fill="#8a6a90" opacity="0.75"/><rect x="75.6" y="58.3" width="2.5" height="2.5" fill="#a07898" opacity="0.75"/><rect x="9.6" y="64.7" width="2.5" height="2.5" fill="#904858" opacity="0.75"/><rect x="93.5" y="41.8" width="2.5" height="2.5" fill="#483c5c" opacity="0.75"/><rect x="31.7" y="51.3" width="2.5" height="2.5" fill="#7a5060" opacity="0.75"/><rect x="94.0" y="49.4" width="2.5" height="2.5" fill="#483c5c" opacity="0.75"/><rect x="31.9" y="57.7" width="2.5" height="2.5" fill="#c88878" opacity="0.75"/><rect x="81.2" y="48.9" width="2.5" height="2.5" fill="#705a80" opacity="0.75"/><rect x="111.9" y="45.5" width="2.5" height="2.5" fill="#705a80" opacity="0.75"/><rect x="16.2" y="48.5" width="2.5" height="2.5" fill="#e0b0a0" opacity="0.75"/><rect x="54.2" y="54.0" width="2.5" height="2.5" fill="#e0b0a0" opacity="0.75"/><rect x="75.7" y="47.7" width="2.5" height="2.5" fill="#483c5c" opacity="0.75"/><rect x="96.7" y="61.5" width="2.5" height="2.5" fill="#705a80" opacity="0.75"/><rect x="123.8" y="58.7" width="2.5" height="2.5" fill="#705a80" opacity="0.75"/><rect x="62.5" y="50.6" width="2.5" height="2.5" fill="#d8a090" opacity="0.75"/><rect x="102.0" y="54.9" width="2.5" height="2.5" fill="#a07898" opacity="0.75"/><rect x="35.7" y="54.3" width="2.5" height="2.5" fill="#e0b0a0" opacity="0.75"/><rect x="73.4" y="53.7" width="2.5" height="2.5" fill="#6a7090" opacity="0.75"/><rect x="36.2" y="41.4" width="2.5" height="2.5" fill="#b06a68" opacity="0.75"/><rect x="65.3" y="55.9" width="2.5" height="2.5" fill="#705a80" opacity="0.75"/><rect x="114.2" y="34.4" width="2.5" height="2.5" fill="#8a6a90" opacity="0.75"/><rect x="1.2" y="42.1" width="2.5" height="2.5" fill="#c88878" opacity="0.75"/><rect x="81.0" y="36.6" width="2.5" height="2.5" fill="#c090a0" opacity="0.75"/><rect x="36.2" y="59.5" width="2.5" height="2.5" fill="#e0b0a0" opacity="0.75"/><rect x="20.9" y="41.2" width="2.5" height="2.5" fill="#d8a090" opacity="0.75"/><rect x="62.9" y="45.4" width="2.5" height="2.5" fill="#d8a090" opacity="0.75"/><rect x="44.7" y="59.1" width="2.5" height="2.5" fill="#7a5060" opacity="0.75"/><rect x="113.0" y="61.1" width="2.5" height="2.5" fill="#5a4a70" opacity="0.75"/><rect x="105.2" y="54.8" width="2.5" height="2.5" fill="#483c5c" opacity="0.75"/><rect x="100.0" y="48.6" width="2.5" height="2.5" fill="#6a7090" opacity="0.75"/><rect x="33.5" y="61.3" width="2.5" height="2.5" fill="#d8a090" opacity="0.75"/><rect x="20.0" y="62.3" width="2.5" height="2.5" fill="#a07080" opacity="0.75"/><rect x="42.3" y="52.2" width="2.5" height="2.5" fill="#e0b0a0" opacity="0.75"/><rect x="107.4" y="39.4" width="2.5" height="2.5" fill="#6a7090" opacity="0.75"/><rect x="48.0" y="36.4" width="2.5" height="2.5" fill="#d8a090" opacity="0.75"/><rect x="10.2" y="35.9" width="2.5" height="2.5" fill="#a07080" opacity="0.75"/><rect x="73.8" y="61.5" width="2.5" height="2.5" fill="#5a4a70" opacity="0.75"/><rect x="38.9" y="60.1" width="2.5" height="2.5" fill="#c88878" opacity="0.75"/><rect x="40.3" y="64.9" width="2.5" height="2.5" fill="#a07080" opacity="0.75"/><rect x="10.6" y="43.6" width="2.5" height="2.5" fill="#e0b0a0" opacity="0.75"/><rect x="99.3" y="44.5" width="2.5" height="2.5" fill="#705a80" opacity="0.75"/><rect x="28.4" y="56.0" width="2.5" height="2.5" fill="#d8a090" opacity="0.75"/><rect x="47.6" y="37.1" width="2.5" height="2.5" fill="#e0b0a0" opacity="0.75"/><rect x="57.3" y="53.8" width="2.5" height="2.5" fill="#e0b0a0" opacity="0.75"/><rect x="118.7" y="48.3" width="2.5" height="2.5" fill="#483c5c" opacity="0.75"/><rect x="129.0" y="49.0" width="2.5" height="2.5" fill="#705a80" opacity="0.75"/><rect x="51.9" y="65.7" width="2.5" height="2.5" fill="#a07080" opacity="0.75"/><rect x="32.3" y="45.7" width="2.5" height="2.5" fill="#d8a090" opacity="0.75"/><rect x="3.1" y="56.7" width="2.5" height="2.5" fill="#a07080" opacity="0.75"/><rect x="50.4" y="39.8" width="2.5" height="2.5" fill="#a07080" opacity="0.75"/><rect x="47.9" y="46.7" width="2.5" height="2.5" fill="#b06a68" opacity="0.75"/><rect x="108.7" y="52.7" width="2.5" height="2.5" fill="#705a80" opacity="0.75"/><rect x="11.7" y="48.9" width="2.5" height="2.5" fill="#7a5060" opacity="0.75"/><rect x="36.6" y="33.8" width="2.5" height="2.5" fill="#a07080" opacity="0.75"/><rect x="7.5" y="38.6" width="2.5" height="2.5" fill="#d8a090" opacity="0.75"/><rect x="125.6" y="55.8" width="2.5" height="2.5" fill="#483c5c" opacity="0.75"/><rect x="55.0" y="53.4" width="2.5" height="2.5" fill="#d8a090" opacity="0.75"/><rect x="102.4" y="35.9" width="2.5" height="2.5" fill="#8a6a90" opacity="0.75"/><rect x="35.6" y="36.7" width="2.5" height="2.5" fill="#d8a090" opacity="0.75"/><rect x="11.0" y="55.2" width="2.5" height="2.5" fill="#b06a68" opacity="0.75"/><rect x="12.7" y="61.6" width="2.5" height="2.5" fill="#904858" opacity="0.75"/><rect x="31.9" y="40.7" width="2.5" height="2.5" fill="#7a5060" opacity="0.75"/><rect x="118.0" y="44.8" width="2.5" height="2.5" fill="#5a4a70" opacity="0.75"/><rect x="51.3" y="44.8" width="2.5" height="2.5" fill="#d8a090" opacity="0.75"/><rect x="87.4" y="50.3" width="2.5" height="2.5" fill="#c090a0" opacity="0.75"/><rect x="104.6" y="35.5" width="2.5" height="2.5" fill="#c090a0" opacity="0.75"/><rect x="118.9" y="47.4" width="2.5" height="2.5" fill="#483c5c" opacity="0.75"/><rect x="128.1" y="45.2" width="2.5" height="2.5" fill="#8a6a90" opacity="0.75"/><rect x="104.8" y="62.2" width="2.5" height="2.5" fill="#5a4a70" opacity="0.75"/><rect x="124.5" y="55.4" width="2.5" height="2.5" fill="#c090a0" opacity="0.75"/><rect x="47.1" y="33.4" width="2.5" height="2.5" fill="#c88878" opacity="0.75"/><rect x="54.8" y="47.7" width="2.5" height="2.5" fill="#b06a68" opacity="0.75"/><rect x="31.9" y="38.7" width="2.5" height="2.5" fill="#e0b0a0" opacity="0.75"/><rect x="48.8" y="38.9" width="2.5" height="2.5" fill="#b06a68" opacity="0.75"/><rect x="50.6" y="51.5" width="2.5" height="2.5" fill="#d8a090" opacity="0.75"/><rect x="126.1" y="35.1" width="2.5" height="2.5" fill="#a07898" opacity="0.75"/><rect x="95.0" y="43.6" width="2.5" height="2.5" fill="#705a80" opacity="0.75"/><rect x="100.9" y="39.3" width="2.5" height="2.5" fill="#8a6a90" opacity="0.75"/><rect x="97.9" y="33.6" width="2.5" height="2.5" fill="#5a4a70" opacity="0.75"/><rect x="118.2" y="34.3" width="2.5" height="2.5" fill="#8a6a90" opacity="0.75"/><rect x="25.7" y="45.6" width="2.5" height="2.5" fill="#a07080" opacity="0.75"/><rect x="30.6" y="58.1" width="2.5" height="2.5" fill="#a07080" opacity="0.75"/><rect x="66.1" y="48.5" width="2.5" height="2.5" fill="#a07898" opacity="0.75"/><rect x="52.3" y="64.9" width="2.5" height="2.5" fill="#d8a090" opacity="0.75"/><rect x="81.5" y="66.0" width="2.5" height="2.5" fill="#c090a0" opacity="0.75"/><rect x="62.3" y="42.1" width="2.5" height="2.5" fill="#904858" opacity="0.75"/><rect x="118.9" y="45.0" width="2.5" height="2.5" fill="#c090a0" opacity="0.75"/><rect x="100.3" y="36.2" width="2.5" height="2.5" fill="#483c5c" opacity="0.75"/><rect x="28.7" y="34.7" width="2.5" height="2.5" fill="#b06a68" opacity="0.75"/><rect x="104.2" y="46.5" width="2.5" height="2.5" fill="#c090a0" opacity="0.75"/><rect x="103.3" y="60.1" width="2.5" height="2.5" fill="#483c5c" opacity="0.75"/><rect x="128.7" y="56.0" width="2.5" height="2.5" fill="#705a80" opacity="0.75"/><rect x="116.0" y="63.6" width="2.5" height="2.5" fill="#a07898" opacity="0.75"/><rect x="58.5" y="41.6" width="2.5" height="2.5" fill="#904858" opacity="0.75"/><rect x="78.8" y="38.5" width="2.5" height="2.5" fill="#705a80" opacity="0.75"/><rect x="100.4" y="38.1" width="2.5" height="2.5" fill="#483c5c" opacity="0.75"/><rect x="105.3" y="37.6" width="2.5" height="2.5" fill="#6a7090" opacity="0.75"/><rect x="129.1" y="42.3" width="2.5" height="2.5" fill="#c090a0" opacity="0.75"/><rect x="6.9" y="53.0" width="2.5" height="2.5" fill="#b06a68" opacity="0.75"/><rect x="0.2" y="61.7" width="2.5" height="2.5" fill="#7a5060" opacity="0.75"/><rect x="19.4" y="37.5" width="2.5" height="2.5" fill="#d8a090" opacity="0.75"/><rect x="35.1" y="58.1" width="2.5" height="2.5" fill="#c88878" opacity="0.75"/><rect x="115.7" y="57.3" width="2.5" height="2.5" fill="#8a6a90" opacity="0.75"/><rect x="124.2" y="53.5" width="2.5" height="2.5" fill="#483c5c" opacity="0.75"/>
<rect x="0" y="33" width="130" height="36" fill="url(#cv)"/>
<rect x="38" y="54" width="14" height="8" fill="#b0c048" opacity="0.5"/>
<rect x="0" y="69" width="38" height="15" fill="#2462d0"/>
<rect x="0" y="83" width="38" height="18" fill="#a8a8a8"/>
<rect x="3" y="88" width="14" height="5" fill="#e0e0e0"/>
<rect x="18" y="90" width="14" height="5" fill="#606060"/>
<rect x="0" y="100" width="130" height="30" fill="#18181c"/>
<rect x="0" y="100" width="36" height="14" fill="#2a2e38"/>
<rect x="96" y="78" width="34" height="25" fill="#b4b6b8"/>
<rect x="100" y="78" width="16" height="6" fill="#e8ecf0"/>
<path d="M116 66 L130 64 L130 90 L118 88 Z" fill="#a0dc40"/>
<path d="M2 62 Q8 56 14 62 L44 66 L86 66 L118 58 Q124 50 130 56 L130 76 L98 80 L98 130 L38 130 L38 82 L4 74 Z" fill="#2a4478"/>
<path d="M38 70 L56 70 L54 130 L38 130 Z" fill="#203868"/>
<path d="M80 70 L98 72 L98 130 L82 130 Z" fill="#1e3266"/>
<path d="M3 54 L12 54 L13 66 L3 67 Z" fill="#c89878"/>
<path d="M121 48 L130 46 L130 60 L122 62 Z" fill="#c89878"/>
<path d="M54 74 L82 74 L82 130 L54 130 Z" fill="#bcc0c2"/>
<path d="M57 70 L80 70 L76 80 L68 76 L60 80 Z" fill="#eeeeee"/>
<ellipse cx="67" cy="58" rx="9.5" ry="13" fill="#c48a6c"/>
<path d="M57 51 Q67 39 77 51 L77 45 Q67 35 57 45 Z" fill="#3a2a20"/>
<rect x="0" y="120" width="12" height="10" fill="#2050b0"/>
<rect x="118" y="125" width="12" height="5" fill="#2b5cc0"/>
</g></svg>
<div class="btn" style="left:360px;top:38px;width:83px;height:28px;line-height:28px">登陆账号</div>
<div class="inp" style="left:472px;top:40px;width:48px;height:24px"><div class="t" style="left:0;top:3px;font-size:12px"><span class="a">9221</span></div></div>
<div class="btn" style="left:536px;top:38px;width:83px;height:28px;line-height:28px">获取群</div>
<div class="abs" style="left:334px;top:71px;width:312px;height:160px;border:1px solid #a9a9a9;background:#fff"></div>
<div class="abs" style="left:335px;top:72px;width:290px;height:25px;background:#f0f0f0;border-bottom:1px solid #a2a2a2"></div>
<div class="sep" style="left:385px;top:76px;height:16px"></div><div class="sep" style="left:585px;top:76px;height:16px"></div>
<div class="hd" style="left:342px;top:77px"><span class="m">ID</span></div>
<div class="hd" style="left:392px;top:77px">群名称</div>
<div class="abs" style="left:591px;top:72px;width:33px;height:23px;overflow:hidden"><div class="hd" style="left:0;top:5px">成员数</div></div>
<div class="cb" style="left:340px;top:98.2px"><svg width="11" height="11" viewBox="0 0 11 11" style="position:absolute;left:0;top:0"><path d="M0.9 5.2 L4 8.2 L9.9 2.1" fill="none" stroke="#404040" stroke-width="1.5"/></svg></div>
<div class="t" style="left:357px;top:97px;font-size:12px"><span class="a">1</span></div>
<div class="t" style="left:428px;top:97px;font-size:12px">七老群</div>
<div class="t" style="left:591px;top:97px;font-size:12px"><span class="a">186</span></div>
<div class="cb" style="left:340px;top:114.2px"><svg width="11" height="11" viewBox="0 0 11 11" style="position:absolute;left:0;top:0"><path d="M0.9 5.2 L4 8.2 L9.9 2.1" fill="none" stroke="#404040" stroke-width="1.5"/></svg></div>
<div class="t" style="left:357px;top:113px;font-size:12px"><span class="a">2</span></div>
<div class="t" style="left:591px;top:113px;font-size:12px"><span class="a">5</span></div>
<div class="cb" style="left:340px;top:130.2px"><svg width="11" height="11" viewBox="0 0 11 11" style="position:absolute;left:0;top:0"><path d="M0.9 5.2 L4 8.2 L9.9 2.1" fill="none" stroke="#404040" stroke-width="1.5"/></svg></div>
<div class="t" style="left:357px;top:129px;font-size:12px"><span class="a">3</span></div>
<div class="t" style="left:429px;top:129px;font-size:12px">爱跳舞的粉丝群<span class="a">22</span>口<span class="m">:m</span></div>
<div class="t" style="left:591px;top:129px;font-size:12px"><span class="a">501</span></div>
<div class="cb" style="left:340px;top:146.2px"><svg width="11" height="11" viewBox="0 0 11 11" style="position:absolute;left:0;top:0"><path d="M0.9 5.2 L4 8.2 L9.9 2.1" fill="none" stroke="#404040" stroke-width="1.5"/></svg></div>
<div class="t" style="left:357px;top:145px;font-size:12px"><span class="a">4</span></div>
<div class="t" style="left:429px;top:145px;font-size:12px">者游戏群<span class="a">2</span>口王者荣耀加</div>
<div class="t" style="left:591px;top:145px;font-size:12px"><span class="a">31</span></div>
<div class="cb" style="left:340px;top:162.2px"><svg width="11" height="11" viewBox="0 0 11 11" style="position:absolute;left:0;top:0"><path d="M0.9 5.2 L4 8.2 L9.9 2.1" fill="none" stroke="#404040" stroke-width="1.5"/></svg></div>
<div class="t" style="left:357px;top:161px;font-size:12px"><span class="a">5</span></div>
<div class="t" style="left:424.5px;top:161px;font-size:12px">探度避坑<span class="a">11</span>群</div>
<div class="t" style="left:591px;top:161px;font-size:12px"><span class="a">364</span></div>
<div class="cb" style="left:340px;top:178.2px"><svg width="11" height="11" viewBox="0 0 11 11" style="position:absolute;left:0;top:0"><path d="M0.9 5.2 L4 8.2 L9.9 2.1" fill="none" stroke="#404040" stroke-width="1.5"/></svg></div>
<div class="t" style="left:357px;top:177px;font-size:12px"><span class="a">6</span></div>
<div class="t" style="left:427.5px;top:177px;font-size:12px">的粉丝群<span class="m">&nbsp;57</span></div>
<div class="t" style="left:591px;top:177px;font-size:12px"><span class="a">438</span></div>
<div class="cb" style="left:340px;top:194.2px"><svg width="11" height="11" viewBox="0 0 11 11" style="position:absolute;left:0;top:0"><path d="M0.9 5.2 L4 8.2 L9.9 2.1" fill="none" stroke="#404040" stroke-width="1.5"/></svg></div>
<div class="t" style="left:357px;top:193px;font-size:12px"><span class="a">7</span></div>
<div class="t" style="left:428px;top:193px;font-size:12px">器（拾月）的粉丝<span class="a">10</span>群</div>
<div class="t" style="left:591px;top:193px;font-size:12px"><span class="a">495</span></div>
<div class="abs" style="left:625px;top:72px;width:20px;height:138px;background:#f7f7f7"></div>
<svg class="abs" style="left:630.5px;top:79px" width="9" height="5" viewBox="0 0 9 5"><path d="M0.8 4.2 L4.5 0.8 L8.2 4.2" fill="none" stroke="#3a3a3a" stroke-width="1.8"/></svg>
<div class="abs" style="left:630px;top:90px;width:11px;height:17px;border-radius:6px;background:#c2c2c2"></div>
<svg class="abs" style="left:630.8px;top:198.5px" width="9" height="5" viewBox="0 0 9 5"><path d="M0.8 0.8 L4.5 4.2 L8.2 0.8" fill="none" stroke="#3a3a3a" stroke-width="1.8"/></svg>
<div class="abs" style="left:335px;top:210px;width:290px;height:20px;background:#f7f7f7"></div>
<div class="abs" style="left:625px;top:210px;width:20px;height:20px;background:#e6e6e6"></div>
<svg class="abs" style="left:342px;top:215px" width="5" height="9" viewBox="0 0 5 9"><path d="M4.2 0.8 L0.8 4.5 L4.2 8.2" fill="none" stroke="#3a3a3a" stroke-width="1.8"/></svg>
<div class="abs" style="left:352px;top:214px;width:124px;height:11px;border-radius:6px;background:#c2c2c2"></div>
<svg class="abs" style="left:613.5px;top:215px" width="5" height="9" viewBox="0 0 5 9"><path d="M0.8 0.8 L4.2 4.5 L0.8 8.2" fill="none" stroke="#3a3a3a" stroke-width="1.8"/></svg>
<div class="abs" style="left:649px;top:53px;width:376px;height:178px;border:1px solid #9cb0c2;background:#fafafc"></div>
<div class="tab" style="left:703px;top:33px;width:47px;height:21px">账号</div>
<div class="tab" style="left:751px;top:33px;width:49px;height:21px">操作</div>
<div class="tab" style="left:801px;top:33px;width:49px;height:21px">话术</div>
<div class="tab" style="left:851px;top:33px;width:49px;height:21px">循环</div>
<div class="tab" style="left:901px;top:33px;width:49px;height:21px">元素</div>
<div class="tab" style="left:951px;top:33px;width:49px;height:21px">说明</div>
<div class="abs" style="left:649px;top:31px;width:54px;height:24px;border:1px solid #9cb0c2;border-bottom:none;border-top:none;background:#fafafc"></div>
<div class="abs" style="left:649px;top:31px;width:54px;height:3px;background:#f7a63a;border-radius:2px 2px 0 0"></div>
<div class="t" style="left:663px;top:35px;font-size:12px;line-height:18px;color:#0000ff">设置</div>
<div class="gb" style="left:665px;top:63px;width:44px;height:24px"></div>
<div class="rcb" style="left:666.5px;top:67px"></div>
<div class="lbl" style="left:684px;top:67px;color:#555">等级</div>
<div class="inp" style="left:713px;top:62.5px;width:24px;height:23px"><div class="t" style="left:0;top:2.5px;font-size:12px"><span class="a">1</span></div></div>
<div class="inp" style="left:757px;top:62.5px;width:24px;height:23px"><div class="t" style="left:0;top:2.5px;font-size:12px"><span class="a">10</span></div></div>
<div class="abs" style="left:742px;top:74.5px;width:6px;height:1px;background:#222"></div>
<div class="gb" style="left:665px;top:98px;width:44px;height:24px"></div>
<div class="rcb" style="left:666.5px;top:102px"></div>
<div class="lbl" style="left:684px;top:102px;color:#555">粉丝</div>
<div class="inp" style="left:713px;top:97.5px;width:24px;height:23px"><div class="t" style="left:0;top:2.5px;font-size:12px"><span class="a">1</span></div></div>
<div class="inp" style="left:757px;top:97.5px;width:24px;height:23px"><div class="t" style="left:0;top:2.5px;font-size:12px"><span class="a">10</span></div></div>
<div class="abs" style="left:742px;top:109.5px;width:6px;height:1px;background:#222"></div>
<div class="gb" style="left:665px;top:131px;width:44px;height:24px"></div>
<div class="rcb" style="left:666.5px;top:135px"></div>
<div class="lbl" style="left:684px;top:135px;color:#555">关注</div>
<div class="inp" style="left:713px;top:130.5px;width:24px;height:23px"><div class="t" style="left:0;top:2.5px;font-size:12px"><span class="a">1</span></div></div>
<div class="inp" style="left:757px;top:130.5px;width:24px;height:23px"><div class="t" style="left:0;top:2.5px;font-size:12px"><span class="a">10</span></div></div>
<div class="abs" style="left:742px;top:142.5px;width:6px;height:1px;background:#222"></div>
<div class="gb" style="left:802px;top:59.5px;width:56px;height:32.5px"></div>
<div class="btn" style="left:804.5px;top:61px;width:51px;height:29px;line-height:30px;font-size:12px">暂停采集</div>
<div class="gb" style="left:863px;top:59.5px;width:56px;height:32.5px"></div>
<div class="btn" style="left:865.5px;top:61px;width:51px;height:29px;line-height:30px;font-size:12px">恢复采集</div>
<div class="gb" style="left:923px;top:59.5px;width:56px;height:32.5px"></div>
<div class="btn" style="left:925.5px;top:61px;width:51px;height:29px;line-height:30px;font-size:12px">停止采集</div>
<div class="gb" style="left:820px;top:98px;width:73px;height:24px"></div>
<div class="rcb" style="left:822px;top:102px"></div>
<div class="lbl" style="left:840px;top:102px;color:#555">自动备份</div>
<div class="inp" style="left:897px;top:101px;width:30px;height:16px"><div class="t" style="left:0;top:-1px;font-size:12px"><span class="a">5</span></div></div>
<div class="lbl" style="left:937px;top:102px;color:#111">分钟</div>
<div class="gb" style="left:820px;top:122px;width:56px;height:31px"></div>
<div class="btn" style="left:823px;top:123px;width:50px;height:27px;line-height:28px;font-size:12px">备份</div>
<div class="gb" style="left:900px;top:122px;width:56px;height:31px"></div>
<div class="btn" style="left:903px;top:123px;width:50px;height:27px;line-height:28px;font-size:12px">导入备份</div>
<div class="gb" style="left:665px;top:157px;width:35.5px;height:23px"></div>
<div class="rcbc" style="left:666.5px;top:161px"><svg width="16" height="16" viewBox="0 0 16 16" style="position:absolute;left:0;top:0"><path d="M3.5 8.2 L6.6 11.3 L12.5 4.5" fill="none" stroke="#fff" stroke-width="1.8"/></svg></div>
<div class="lbl" style="left:684px;top:161px;color:#444">男</div>
<div class="gb" style="left:703.5px;top:157px;width:32.5px;height:23px"></div>
<div class="rcbc" style="left:705px;top:161px"><svg width="16" height="16" viewBox="0 0 16 16" style="position:absolute;left:0;top:0"><path d="M3.5 8.2 L6.6 11.3 L12.5 4.5" fill="none" stroke="#fff" stroke-width="1.8"/></svg></div>
<div class="lbl" style="left:722.5px;top:161px;color:#444">女</div>
<div class="gb" style="left:740px;top:157px;width:50px;height:23px"></div>
<div class="rcbc" style="left:741.5px;top:161px"><svg width="16" height="16" viewBox="0 0 16 16" style="position:absolute;left:0;top:0"><path d="M3.5 8.2 L6.6 11.3 L12.5 4.5" fill="none" stroke="#fff" stroke-width="1.8"/></svg></div>
<div class="lbl" style="left:759px;top:161px;color:#444">未知</div>
<div class="gb" style="left:791px;top:157px;width:68.5px;height:23px"></div>
<div class="rcbc" style="left:792.5px;top:161px"><svg width="16" height="16" viewBox="0 0 16 16" style="position:absolute;left:0;top:0"><path d="M3.5 8.2 L6.6 11.3 L12.5 4.5" fill="none" stroke="#fff" stroke-width="1.8"/></svg></div>
<div class="lbl" style="left:810px;top:161px;color:#444">监控进群</div>
<div class="gb" style="left:866.5px;top:156px;width:68px;height:23px"></div>
<div class="rcbc" style="left:868px;top:160px"><svg width="16" height="16" viewBox="0 0 16 16" style="position:absolute;left:0;top:0"><path d="M3.5 8.2 L6.6 11.3 L12.5 4.5" fill="none" stroke="#fff" stroke-width="1.8"/></svg></div>
<div class="lbl" style="left:885.5px;top:160px;color:#444">监控群聊</div>
<div class="gb" style="left:940px;top:155px;width:68px;height:23.5px"></div>
<div class="rcbc" style="left:941.5px;top:159px"><svg width="16" height="16" viewBox="0 0 16 16" style="position:absolute;left:0;top:0"><path d="M3.5 8.2 L6.6 11.3 L12.5 4.5" fill="none" stroke="#fff" stroke-width="1.8"/></svg></div>
<div class="lbl" style="left:959px;top:159px;color:#444">监控私聊</div>
<div class="gb" style="left:665px;top:181px;width:72px;height:21px"></div>
<div class="rcb" style="left:666.5px;top:184px"></div>
<div class="lbl" style="left:684px;top:184px;color:#444">保持跟随</div>
<div class="gb" style="left:740.5px;top:181px;width:72px;height:21px"></div>
<div class="rcb" style="left:742px;top:184px"></div>
<div class="lbl" style="left:759.5px;top:184px;color:#444">只带手机</div>
<div class="gb" style="left:818px;top:180px;width:71.5px;height:21px"></div>
<div class="rcbc" style="left:819.5px;top:183px"><svg width="16" height="16" viewBox="0 0 16 16" style="position:absolute;left:0;top:0"><path d="M3.5 8.2 L6.6 11.3 L12.5 4.5" fill="none" stroke="#fff" stroke-width="1.8"/></svg></div>
<div class="lbl" style="left:837px;top:183px;color:#444">用户去重</div>
<div class="gb" style="left:893px;top:180px;width:72.5px;height:21px"></div>
<div class="rcb" style="left:894.5px;top:183px"></div>
<div class="lbl" style="left:912px;top:183px;color:#444">去除隐私</div>
<div class="gb" style="left:665px;top:203px;width:96px;height:23px"></div>
<div class="rcb" style="left:666.5px;top:207px"></div>
<div class="lbl" style="left:684px;top:207px;color:#444">进群微信推送</div>
<div class="inp" style="left:762px;top:202px;width:248px;height:22px"></div>
<div class="abs" style="left:2px;top:257px;width:1023px;height:294px;border:1px solid #90b8e8;border-bottom:none;background:#fff"></div>
<div class="abs" style="left:120px;top:255px;width:905px;height:1px;background:#8aa0b0"></div>
<div class="abs" style="left:120px;top:256px;width:905px;height:1px;background:#fafafa"></div>
<div class="tab" style="left:64px;top:236px;width:56px;height:22px;line-height:20px;border-color:#9cb0c2">成员采集</div>
<div class="abs" style="left:2px;top:233px;width:63px;height:25px;background:#fff;border:1px solid #8db7e3;border-bottom:none;border-top:none"></div>
<div class="abs" style="left:2px;top:233px;width:63px;height:2px;background:#f7a63a"></div>
<div class="t" style="left:7px;top:237px;font-size:12px;line-height:18px;color:#0000ff">进群监控</div>
<div class="abs" style="left:3px;top:258px;width:1001px;height:25px;background:#f0f0f0;border-bottom:1px solid #a2a2a2"></div>
<div class="sep" style="left:53px;top:262px;height:16px"></div>
<div class="sep" style="left:153px;top:262px;height:16px"></div>
<div class="sep" style="left:273px;top:262px;height:16px"></div>
<div class="sep" style="left:373px;top:262px;height:16px"></div>
<div class="sep" style="left:484px;top:262px;height:16px"></div>
<div class="sep" style="left:573px;top:262px;height:16px"></div>
<div class="sep" style="left:756px;top:262px;height:16px"></div>
<div class="sep" style="left:919px;top:262px;height:16px"></div>
<div class="hd" style="left:10px;top:263px"><span class="m">ID</span></div>
<div class="hd" style="left:59px;top:263px">账户名</div>
<div class="hd" style="left:159px;top:263px">群名称</div>
<div class="hd" style="left:279px;top:263px">昵称</div>
<div class="hd" style="left:379px;top:263px">抖音号</div>
<div class="hd" style="left:489px;top:263px">手机号</div>
<div class="hd" style="left:579px;top:263px">时间</div>
<div class="hd" style="left:762px;top:263px">进群方式</div>
<div class="hd" style="left:926px;top:263px">聊天内容</div>
<div class="abs" style="left:3px;top:283px;width:1001px;height:252px;overflow:hidden">
<div class="cb" style="left:5px;top:1.2px"><svg width="11" height="11" viewBox="0 0 11 11" style="position:absolute;left:0;top:0"><path d="M0.9 5.2 L4 8.2 L9.9 2.1" fill="none" stroke="#404040" stroke-width="1.5"/></svg></div>
<div class="t" style="left:23px;top:0px;font-size:12px;color:#000"><span class="a">1</span></div>
<div class="t" style="left:56px;top:0px;font-size:12px;color:#000">抖贩网络科<span class="m">...</span></div>
<div class="t" style="left:156.6px;top:0px;font-size:12px;color:#000">私聊消息</div>
<div class="t" style="left:289.7px;top:0px;font-size:12px;color:#000">能获客引<span class="m">...</span></div>
<div class="t" style="left:400px;top:0px;font-size:12px;color:#000"><span class="a">3634111</span></div>
<div class="t" style="left:486.5px;top:0px;font-size:12px;color:#000"><span class="a">12345678911</span></div>
<div class="t" style="left:576.3px;top:0px;font-size:12px;color:#000"><span class="a">2024</span>年<span class="a">11</span>月<span class="a">18</span>日<span class="a">11</span>时<span class="a">45</span>分<span class="a">57</span>秒</div>
<div class="t" style="left:923px;top:0px;font-size:12px;color:#000"><span class="m">[</span>抠鼻<span class="m">][</span>抠鼻<span class="m">][</span>抠鼻<span class="m">]</span></div>
<div class="cb" style="left:5px;top:17.2px"><svg width="11" height="11" viewBox="0 0 11 11" style="position:absolute;left:0;top:0"><path d="M0.9 5.2 L4 8.2 L9.9 2.1" fill="none" stroke="#404040" stroke-width="1.5"/></svg></div>
<div class="t" style="left:23px;top:16px;font-size:12px;color:#000"><span class="a">2</span></div>
<div class="t" style="left:72px;top:16px;font-size:12px;color:#000">日</div>
<div class="t" style="left:170px;top:16px;font-size:12px;color:#000">哥谈球、全网<span class="m">...</span></div>
<div class="t" style="left:289.7px;top:16px;font-size:12px;color:#000">仔<span class="m">???</span>ჴ<span class="m">?</span></div>
<div class="t" style="left:400px;top:16px;font-size:12px;color:#000"><span class="a">8070530</span></div>
<div class="t" style="left:576.3px;top:16px;font-size:12px;color:#000"><span class="a">2024</span>年<span class="a">11</span>月<span class="a">18</span>日<span class="a">12</span>时<span class="a">17</span>分<span class="a">55</span>秒</div>
<div class="t" style="left:760px;top:16px;font-size:12px;color:#000">通过辰</div>
<div class="t" style="left:820px;top:16px;font-size:12px;color:#000">球～体育的主页</div>
<div class="cb" style="left:5px;top:33.2px"></div>
<div class="t" style="left:23px;top:32px;font-size:12px;color:#000"><span class="a">3</span></div>
<div class="t" style="left:72px;top:32px;font-size:12px;color:#000">日</div>
<div class="t" style="left:170px;top:32px;font-size:12px;color:#000">皙的粉丝群<span class="m">&nbsp;40</span></div>
<div class="t" style="left:289.7px;top:32px;font-size:12px;color:#000">心冷</div>
<div class="t" style="left:400px;top:32px;font-size:12px;color:#000"><span class="a">3766054</span></div>
<div class="t" style="left:576.3px;top:32px;font-size:12px;color:#000"><span class="a">2024</span>年<span class="a">11</span>月<span class="a">18</span>日<span class="a">12</span>时<span class="a">17</span>分<span class="a">59</span>秒</div>
<div class="t" style="left:760px;top:32px;font-size:12px;color:#000">通过球</div>
<div class="t" style="left:820px;top:32px;font-size:12px;color:#000">主页</div>
<div class="cb" style="left:5px;top:49.2px"></div>
<div class="t" style="left:23px;top:48px;font-size:12px;color:#000"><span class="a">4</span></div>
<div class="t" style="left:72px;top:48px;font-size:12px;color:#000">日</div>
<div class="t" style="left:170px;top:48px;font-size:12px;color:#000">未侃球的粉丝群<span class="m">&nbsp;1</span></div>
<div class="t" style="left:289.7px;top:48px;font-size:12px;color:#000">逍遥<span class="a">613</span></div>
<div class="t" style="left:400px;top:48px;font-size:12px;color:#000"><span class="a">613613613</span></div>
<div class="t" style="left:576.3px;top:48px;font-size:12px;color:#000"><span class="a">2024</span>年<span class="a">11</span>月<span class="a">18</span>日<span class="a">12</span>时<span class="a">19</span>分<span class="a">25</span>秒</div>
<div class="t" style="left:760px;top:48px;font-size:12px;color:#000">通过虹</div>
<div class="t" style="left:820px;top:48px;font-size:12px;color:#000">球的主页</div>
<div class="cb" style="left:5px;top:65.2px"></div>
<div class="t" style="left:23px;top:64px;font-size:12px;color:#000"><span class="a">5</span></div>
<div class="t" style="left:72px;top:64px;font-size:12px;color:#000">日</div>
<div class="t" style="left:170px;top:64px;font-size:12px;color:#000">管<span class="m">LIVE</span>的粉丝<span class="m">...</span></div>
<div class="t" style="left:289.7px;top:64px;font-size:12px;color:#000">龙</div>
<div class="t" style="left:400px;top:64px;font-size:12px;color:#000"><span class="a">897200</span></div>
<div class="t" style="left:576.3px;top:64px;font-size:12px;color:#000"><span class="a">2024</span>年<span class="a">11</span>月<span class="a">18</span>日<span class="a">12</span>时<span class="a">20</span>分<span class="a">17</span>秒</div>
<div class="t" style="left:760px;top:64px;font-size:12px;color:#000">通过前</div>
<div class="t" style="left:820px;top:64px;font-size:12px;color:#000"><span class="m">VE</span>的主页</div>
<div class="cb" style="left:5px;top:81.2px"></div>
<div class="t" style="left:23px;top:80px;font-size:12px;color:#000"><span class="a">6</span></div>
<div class="t" style="left:72px;top:80px;font-size:12px;color:#000">日</div>
<div class="t" style="left:170px;top:80px;font-size:12px;color:#000">惧聊球的粉丝<span class="m">...</span></div>
<div class="t" style="left:289.7px;top:80px;font-size:12px;color:#000"><span class="a">537017072</span></div>
<div class="t" style="left:400px;top:80px;font-size:12px;color:#000"><span class="a">017072</span></div>
<div class="t" style="left:576.3px;top:80px;font-size:12px;color:#000"><span class="a">2024</span>年<span class="a">11</span>月<span class="a">18</span>日<span class="a">12</span>时<span class="a">20</span>分<span class="a">59</span>秒</div>
<div class="t" style="left:760px;top:80px;font-size:12px;color:#000">通过阿</div>
<div class="t" style="left:820px;top:80px;font-size:12px;color:#000">球的主页</div>
<div class="cb" style="left:5px;top:97.2px"></div>
<div class="t" style="left:23px;top:96px;font-size:12px;color:#000"><span class="a">7</span></div>
<div class="t" style="left:72px;top:96px;font-size:12px;color:#000">日</div>
<div class="t" style="left:170px;top:96px;font-size:12px;color:#000">哥球会<span class="a">1</span>群<span class="a">24</span>欢<span class="m">...</span></div>
<div class="t" style="left:289.7px;top:96px;font-size:12px;color:#000">奇奇要红</div>
<div class="t" style="left:400px;top:96px;font-size:12px;color:#000"><span class="a">004273</span></div>
<div class="t" style="left:576.3px;top:96px;font-size:12px;color:#000"><span class="a">2024</span>年<span class="a">11</span>月<span class="a">18</span>日<span class="a">12</span>时<span class="a">22</span>分<span class="a">35</span>秒</div>
<div class="t" style="left:760px;top:96px;font-size:12px;color:#000">通过（</div>
<div class="t" style="left:820px;top:96px;font-size:12px;color:#000">球会之）西哥<span class="m">...</span></div>
<div class="cb" style="left:5px;top:113.2px"></div>
<div class="t" style="left:23px;top:112px;font-size:12px;color:#000"><span class="a">8</span></div>
<div class="t" style="left:72px;top:112px;font-size:12px;color:#000">日</div>
<div class="t" style="left:170px;top:112px;font-size:12px;color:#000">识讯的粉丝群<span class="m">&nbsp;19</span></div>
<div class="t" style="left:289.7px;top:112px;font-size:12px;color:#000">村小阿弟<span class="m">?...</span></div>
<div class="t" style="left:400px;top:112px;font-size:12px;color:#000"><span class="a">9673</span></div>
<div class="t" style="left:576.3px;top:112px;font-size:12px;color:#000"><span class="a">2024</span>年<span class="a">11</span>月<span class="a">18</span>日<span class="a">12</span>时<span class="a">23</span>分<span class="a">27</span>秒</div>
<div class="t" style="left:760px;top:112px;font-size:12px;color:#000">通过捷</div>
<div class="t" style="left:820px;top:112px;font-size:12px;color:#000">的主页</div>
<div class="cb" style="left:5px;top:129.2px"><svg width="11" height="11" viewBox="0 0 11 11" style="position:absolute;left:0;top:0"><path d="M0.9 5.2 L4 8.2 L9.9 2.1" fill="none" stroke="#404040" stroke-width="1.5"/></svg></div>
<div class="t" style="left:23px;top:128px;font-size:12px;color:#000"><span class="a">9</span></div>
<div class="t" style="left:72px;top:128px;font-size:12px;color:#000">日</div>
<div class="t" style="left:170px;top:128px;font-size:12px;color:#000">乐粉丝<span class="a">2</span>群</div>
<div class="t" style="left:289.7px;top:128px;font-size:12px;color:#000">子助理<span class="m">-</span>认<span class="m">...</span></div>
<div class="t" style="left:400px;top:128px;font-size:12px;color:#000"><span class="a">98628</span></div>
<div class="t" style="left:576.3px;top:128px;font-size:12px;color:#000"><span class="a">2024</span>年<span class="a">11</span>月<span class="a">18</span>日<span class="a">12</span>时<span class="a">23</span>分<span class="a">45</span>秒</div>
<div class="t" style="left:923px;top:128px;font-size:12px;color:#000"><span class="m">@</span>所有人</div>
<div class="abs" style="left:21px;top:144px;width:980px;height:16px;background:#0078d7"></div>
<div class="cb" style="left:5px;top:145.2px"><svg width="11" height="11" viewBox="0 0 11 11" style="position:absolute;left:0;top:0"><path d="M0.9 5.2 L4 8.2 L9.9 2.1" fill="none" stroke="#404040" stroke-width="1.5"/></svg></div>
<div class="t" style="left:23px;top:144px;font-size:12px;color:#fff"><span class="a">10</span></div>
<div class="t" style="left:72px;top:144px;font-size:12px;color:#fff">日</div>
<div class="t" style="left:170px;top:144px;font-size:12px;color:#fff">日挑战赛</div>
<div class="t" style="left:289.7px;top:144px;font-size:12px;color:#fff">航者<span class="m">&nbsp;er</span></div>
<div class="t" style="left:400px;top:144px;font-size:12px;color:#fff"><span class="a">77678</span></div>
<div class="t" style="left:576.3px;top:144px;font-size:12px;color:#fff"><span class="a">2024</span>年<span class="a">11</span>月<span class="a">18</span>日<span class="a">12</span>时<span class="a">25</span>分<span class="a">18</span>秒</div>
<div class="t" style="left:923px;top:144px;font-size:12px;color:#fff">咋一下这么多人</div>
<div class="cb" style="left:5px;top:161.2px"><svg width="11" height="11" viewBox="0 0 11 11" style="position:absolute;left:0;top:0"><path d="M0.9 5.2 L4 8.2 L9.9 2.1" fill="none" stroke="#404040" stroke-width="1.5"/></svg></div>
<div class="t" style="left:23px;top:160px;font-size:12px;color:#000"><span class="a">11</span></div>
<div class="t" style="left:72px;top:160px;font-size:12px;color:#000">日</div>
<div class="t" style="left:170px;top:160px;font-size:12px;color:#000">哥球会<span class="a">1</span>群<span class="a">24</span>欢<span class="m">...</span></div>
<div class="t" style="left:289.7px;top:160px;font-size:12px;color:#000">子座流星雨</div>
<div class="t" style="left:400px;top:160px;font-size:12px;color:#000"><span class="m">92x90k</span></div>
<div class="t" style="left:576.3px;top:160px;font-size:12px;color:#000"><span class="a">2024</span>年<span class="a">11</span>月<span class="a">18</span>日<span class="a">12</span>时<span class="a">25</span>分<span class="a">38</span>秒</div>
<div class="t" style="left:760px;top:160px;font-size:12px;color:#000">通过（</div>
<div class="t" style="left:820px;top:160px;font-size:12px;color:#000">球会之）西哥<span class="m">...</span></div>
<div class="cb" style="left:5px;top:177.2px"></div>
<div class="t" style="left:23px;top:176px;font-size:12px;color:#000"><span class="a">12</span></div>
<div class="t" style="left:72px;top:176px;font-size:12px;color:#000">日</div>
<div class="t" style="left:170px;top:176px;font-size:12px;color:#000">未侃球的粉丝群<span class="m">&nbsp;1</span></div>
<div class="t" style="left:289.7px;top:176px;font-size:12px;color:#000"><span class="m">-i</span></div>
<div class="t" style="left:400px;top:176px;font-size:12px;color:#000"><span class="a">410</span></div>
<div class="t" style="left:576.3px;top:176px;font-size:12px;color:#000"><span class="a">2024</span>年<span class="a">11</span>月<span class="a">18</span>日<span class="a">12</span>时<span class="a">25</span>分<span class="a">55</span>秒</div>
<div class="t" style="left:760px;top:176px;font-size:12px;color:#000">被虹妹</div>
<div class="t" style="left:820px;top:176px;font-size:12px;color:#000">邀请进群</div>
<div class="cb" style="left:5px;top:193.2px"><svg width="11" height="11" viewBox="0 0 11 11" style="position:absolute;left:0;top:0"><path d="M0.9 5.2 L4 8.2 L9.9 2.1" fill="none" stroke="#404040" stroke-width="1.5"/></svg></div>
<div class="t" style="left:23px;top:192px;font-size:12px;color:#000"><span class="a">13</span></div>
<div class="t" style="left:72px;top:192px;font-size:12px;color:#000">日</div>
<div class="t" style="left:170px;top:192px;font-size:12px;color:#000">深日记<span class="a">2</span></div>
<div class="t" style="left:289.7px;top:192px;font-size:12px;color:#000"><span class="m">en</span></div>
<div class="t" style="left:400px;top:192px;font-size:12px;color:#000"><span class="a">924</span></div>
<div class="t" style="left:576.3px;top:192px;font-size:12px;color:#000"><span class="a">2024</span>年<span class="a">11</span>月<span class="a">18</span>日<span class="a">12</span>时<span class="a">26</span>分<span class="a">41</span>秒</div>
<div class="t" style="left:760px;top:192px;font-size:12px;color:#000">通过神</div>
<div class="t" style="left:820px;top:192px;font-size:12px;color:#000">记的主页</div>
<div class="cb" style="left:5px;top:209.2px"><svg width="11" height="11" viewBox="0 0 11 11" style="position:absolute;left:0;top:0"><path d="M0.9 5.2 L4 8.2 L9.9 2.1" fill="none" stroke="#404040" stroke-width="1.5"/></svg></div>
<div class="t" style="left:23px;top:208px;font-size:12px;color:#000"><span class="a">14</span></div>
<div class="t" style="left:72px;top:208px;font-size:12px;color:#000">日</div>
<div class="t" style="left:170px;top:208px;font-size:12px;color:#000">日挑战赛</div>
<div class="t" style="left:289.7px;top:208px;font-size:12px;color:#000">吧<span class="m">?</span>布鲁姆</div>
<div class="t" style="left:400px;top:208px;font-size:12px;color:#000"><span class="a">59545</span></div>
<div class="t" style="left:576.3px;top:208px;font-size:12px;color:#000"><span class="a">2024</span>年<span class="a">11</span>月<span class="a">18</span>日<span class="a">12</span>时<span class="a">27</span>分<span class="a">36</span>秒</div>
<div class="t" style="left:923px;top:208px;font-size:12px;color:#000">不知道呗，后面</div>
<div class="cb" style="left:5px;top:225.2px"></div>
<div class="t" style="left:23px;top:224px;font-size:12px;color:#000"><span class="a">15</span></div>
<div class="t" style="left:72px;top:224px;font-size:12px;color:#000">日</div>
<div class="t" style="left:170px;top:224px;font-size:12px;color:#000">州音乐广播<span class="m">&nbsp;</span>的<span class="m">...</span></div>
<div class="t" style="left:289.7px;top:224px;font-size:12px;color:#000">胡界</div>
<div class="t" style="left:400px;top:224px;font-size:12px;color:#000"><span class="m">xa6voupz</span></div>
<div class="t" style="left:576.3px;top:224px;font-size:12px;color:#000"><span class="a">2024</span>年<span class="a">11</span>月<span class="a">18</span>日<span class="a">12</span>时<span class="a">28</span>分<span class="a">14</span>秒</div>
<div class="t" style="left:760px;top:224px;font-size:12px;color:#000">通过郑</div>
<div class="t" style="left:820px;top:224px;font-size:12px;color:#000">乐广播的主页</div>
<div class="cb" style="left:5px;top:241.2px"></div>
<div class="t" style="left:23px;top:240px;font-size:12px;color:#000"><span class="a">16</span></div>
<div class="t" style="left:72px;top:240px;font-size:12px;color:#000">日</div>
<div class="t" style="left:170px;top:240px;font-size:12px;color:#000">子评球专用号<span class="m">...</span></div>
<div class="t" style="left:289.7px;top:240px;font-size:12px;color:#000"><span class="m">????????...</span></div>
<div class="t" style="left:400px;top:240px;font-size:12px;color:#000"><span class="m">6888d</span></div>
<div class="t" style="left:576.3px;top:240px;font-size:12px;color:#000"><span class="a">2024</span>年<span class="a">11</span>月<span class="a">18</span>日<span class="a">12</span>时<span class="a">28</span>分<span class="a">17</span>秒</div>
<div class="t" style="left:760px;top:240px;font-size:12px;color:#000">通过兔</div>
<div class="t" style="left:820px;top:240px;font-size:12px;color:#000">球专用号的主页</div>
</div>
<div class="abs" style="left:1004px;top:258px;width:20px;height:278px;background:#f4f4f4"></div>
<svg class="abs" style="left:1009.4px;top:265.1px" width="9" height="5" viewBox="0 0 9 5"><path d="M0.8 4.2 L4.5 0.8 L8.2 4.2" fill="none" stroke="#3a3a3a" stroke-width="1.8"/></svg>
<div class="abs" style="left:1009px;top:277px;width:11px;height:224px;border-radius:6px;background:#c2c2c2"></div>
<svg class="abs" style="left:1009px;top:524.2px" width="9" height="5" viewBox="0 0 9 5"><path d="M0.8 0.8 L4.5 4.2 L8.2 0.8" fill="none" stroke="#3a3a3a" stroke-width="1.8"/></svg>
<div class="abs" style="left:3px;top:535px;width:1001px;height:16px;background:#f4f4f4"></div>
<div class="abs" style="left:1004px;top:535px;width:20px;height:16px;background:#ebebeb"></div>
<svg class="abs" style="left:10px;top:540.5px" width="5" height="9" viewBox="0 0 5 9"><path d="M4.2 0.8 L0.8 4.5 L4.2 8.2" fill="none" stroke="#3a3a3a" stroke-width="1.8"/></svg>
<div class="abs" style="left:20px;top:539.5px;width:478px;height:11px;border-radius:6px;background:#c2c2c2"></div>
<svg class="abs" style="left:992.9px;top:540.5px" width="5" height="9" viewBox="0 0 5 9"><path d="M0.8 0.8 L4.2 4.5 L0.8 8.2" fill="none" stroke="#3a3a3a" stroke-width="1.8"/></svg>
<div class="abs" style="left:60px;top:282px;width:19px;height:259px;clip-path:polygon(3px 0,12px 8px,19px 18px,19px 252px,17px 259px,9px 253px,0 250px,0 8px)"><div style="position:absolute;left:0px;top:0px;width:10.5px;height:10.5px;background:#adadad"></div><div style="position:absolute;left:10px;top:0px;width:10.5px;height:10.5px;background:#c9c9c9"></div><div style="position:absolute;left:0px;top:10px;width:10.5px;height:10.5px;background:#a9a9a9"></div><div style="position:absolute;left:10px;top:10px;width:10.5px;height:10.5px;background:#b5b5b5"></div><div style="position:absolute;left:0px;top:20px;width:10.5px;height:10.5px;background:#acacac"></div><div style="position:absolute;left:10px;top:20px;width:10.5px;height:10.5px;background:#c4c4c4"></div><div style="position:absolute;left:0px;top:30px;width:10.5px;height:10.5px;background:#c1c1c1"></div><div style="position:absolute;left:10px;top:30px;width:10.5px;height:10.5px;background:#c3c3c3"></div><div style="position:absolute;left:0px;top:40px;width:10.5px;height:10.5px;background:#bdbdbd"></div><div style="position:absolute;left:10px;top:40px;width:10.5px;height:10.5px;background:#b2b2b2"></div><div style="position:absolute;left:0px;top:50px;width:10.5px;height:10.5px;background:#ababab"></div><div style="position:absolute;left:10px;top:50px;width:10.5px;height:10.5px;background:#c4c4c4"></div><div style="position:absolute;left:0px;top:60px;width:10.5px;height:10.5px;background:#a6a6a6"></div><div style="position:absolute;left:10px;top:60px;width:10.5px;height:10.5px;background:#bdbdbd"></div><div style="position:absolute;left:0px;top:70px;width:10.5px;height:10.5px;background:#c0c0c0"></div><div style="position:absolute;left:10px;top:70px;width:10.5px;height:10.5px;background:#cbcbcb"></div><div style="position:absolute;left:0px;top:80px;width:10.5px;height:10.5px;background:#a5a5a5"></div><div style="position:absolute;left:10px;top:80px;width:10.5px;height:10.5px;background:#c1c1c1"></div><div style="position:absolute;left:0px;top:90px;width:10.5px;height:10.5px;background:#b6b6b6"></div><div style="position:absolute;left:10px;top:90px;width:10.5px;height:10.5px;background:#b3b3b3"></div><div style="position:absolute;left:0px;top:100px;width:10.5px;height:10.5px;background:#cacaca"></div><div style="position:absolute;left:10px;top:100px;width:10.5px;height:10.5px;background:#ababab"></div><div style="position:absolute;left:0px;top:110px;width:10.5px;height:10.5px;background:#b9b9b9"></div><div style="position:absolute;left:10px;top:110px;width:10.5px;height:10.5px;background:#a6a6a6"></div><div style="position:absolute;left:0px;top:120px;width:10.5px;height:10.5px;background:#a6a6a6"></div><div style="position:absolute;left:10px;top:120px;width:10.5px;height:10.5px;background:#a6a6a6"></div><div style="position:absolute;left:0px;top:130px;width:10.5px;height:10.5px;background:#c7c7c7"></div><div style="position:absolute;left:10px;top:130px;width:10.5px;height:10.5px;background:#a5a5a5"></div><div style="position:absolute;left:0px;top:140px;width:10.5px;height:10.5px;background:#bdbdbd"></div><div style="position:absolute;left:10px;top:140px;width:10.5px;height:10.5px;background:#b2b2b2"></div><div style="position:absolute;left:0px;top:150px;width:10.5px;height:10.5px;background:#c0c0c0"></div><div style="position:absolute;left:10px;top:150px;width:10.5px;height:10.5px;background:#a6a6a6"></div><div style="position:absolute;left:0px;top:160px;width:10.5px;height:10.5px;background:#c6c6c6"></div><div style="position:absolute;left:10px;top:160px;width:10.5px;height:10.5px;background:#b3b3b3"></div><div style="position:absolute;left:0px;top:170px;width:10.5px;height:10.5px;background:#c1c1c1"></div><div style="position:absolute;left:10px;top:170px;width:10.5px;height:10.5px;background:#c4c4c4"></div><div style="position:absolute;left:0px;top:180px;width:10.5px;height:10.5px;background:#c8c8c8"></div><div style="position:absolute;left:10px;top:180px;width:10.5px;height:10.5px;background:#b3b3b3"></div><div style="position:absolute;left:0px;top:190px;width:10.5px;height:10.5px;background:#bbbbbb"></div><div style="position:absolute;left:10px;top:190px;width:10.5px;height:10.5px;background:#b3b3b3"></div><div style="position:absolute;left:0px;top:200px;width:10.5px;height:10.5px;background:#b3b3b3"></div><div style="position:absolute;left:10px;top:200px;width:10.5px;height:10.5px;background:#c2c2c2"></div><div style="position:absolute;left:0px;top:210px;width:10.5px;height:10.5px;background:#b7b7b7"></div><div style="position:absolute;left:10px;top:210px;width:10.5px;height:10.5px;background:#a6a6a6"></div><div style="position:absolute;left:0px;top:220px;width:10.5px;height:10.5px;background:#bfbfbf"></div><div style="position:absolute;left:10px;top:220px;width:10.5px;height:10.5px;background:#c8c8c8"></div><div style="position:absolute;left:0px;top:230px;width:10.5px;height:10.5px;background:#ababab"></div><div style="position:absolute;left:10px;top:230px;width:10.5px;height:10.5px;background:#b0b0b0"></div><div style="position:absolute;left:0px;top:240px;width:10.5px;height:10.5px;background:#cdcdcd"></div><div style="position:absolute;left:10px;top:240px;width:10.5px;height:10.5px;background:#b7b7b7"></div><div style="position:absolute;left:0px;top:250px;width:10.5px;height:10.5px;background:#acacac"></div><div style="position:absolute;left:10px;top:250px;width:10.5px;height:10.5px;background:#bababa"></div></div>
<div class="abs" style="left:156px;top:294px;width:22px;height:247px;clip-path:polygon(0 10px,9px 0,17px 0,22px 12px,22px 230px,17px 247px,0 240px)"><div style="position:absolute;left:0px;top:0px;width:11.5px;height:11.5px;background:#adadad"></div><div style="position:absolute;left:11px;top:0px;width:11.5px;height:11.5px;background:#afafaf"></div><div style="position:absolute;left:0px;top:11px;width:11.5px;height:11.5px;background:#afafaf"></div><div style="position:absolute;left:11px;top:11px;width:11.5px;height:11.5px;background:#c1c1c1"></div><div style="position:absolute;left:0px;top:22px;width:11.5px;height:11.5px;background:#b4b4b4"></div><div style="position:absolute;left:11px;top:22px;width:11.5px;height:11.5px;background:#d4d4d4"></div><div style="position:absolute;left:0px;top:33px;width:11.5px;height:11.5px;background:#bdbdbd"></div><div style="position:absolute;left:11px;top:33px;width:11.5px;height:11.5px;background:#bababa"></div><div style="position:absolute;left:0px;top:44px;width:11.5px;height:11.5px;background:#d0d0d0"></div><div style="position:absolute;left:11px;top:44px;width:11.5px;height:11.5px;background:#b7b7b7"></div><div style="position:absolute;left:0px;top:55px;width:11.5px;height:11.5px;background:#d0d0d0"></div><div style="position:absolute;left:11px;top:55px;width:11.5px;height:11.5px;background:#acacac"></div><div style="position:absolute;left:0px;top:66px;width:11.5px;height:11.5px;background:#cfcfcf"></div><div style="position:absolute;left:11px;top:66px;width:11.5px;height:11.5px;background:#d5d5d5"></div><div style="position:absolute;left:0px;top:77px;width:11.5px;height:11.5px;background:#b4b4b4"></div><div style="position:absolute;left:11px;top:77px;width:11.5px;height:11.5px;background:#c5c5c5"></div><div style="position:absolute;left:0px;top:88px;width:11.5px;height:11.5px;background:#d2d2d2"></div><div style="position:absolute;left:11px;top:88px;width:11.5px;height:11.5px;background:#c3c3c3"></div><div style="position:absolute;left:0px;top:99px;width:11.5px;height:11.5px;background:#cacaca"></div><div style="position:absolute;left:11px;top:99px;width:11.5px;height:11.5px;background:#c1c1c1"></div><div style="position:absolute;left:0px;top:110px;width:11.5px;height:11.5px;background:#cccccc"></div><div style="position:absolute;left:11px;top:110px;width:11.5px;height:11.5px;background:#c6c6c6"></div><div style="position:absolute;left:0px;top:121px;width:11.5px;height:11.5px;background:#cacaca"></div><div style="position:absolute;left:11px;top:121px;width:11.5px;height:11.5px;background:#bbbbbb"></div><div style="position:absolute;left:0px;top:132px;width:11.5px;height:11.5px;background:#acacac"></div><div style="position:absolute;left:11px;top:132px;width:11.5px;height:11.5px;background:#ababab"></div><div style="position:absolute;left:0px;top:143px;width:11.5px;height:11.5px;background:#c1c1c1"></div><div style="position:absolute;left:11px;top:143px;width:11.5px;height:11.5px;background:#c7c7c7"></div><div style="position:absolute;left:0px;top:154px;width:11.5px;height:11.5px;background:#bebebe"></div><div style="position:absolute;left:11px;top:154px;width:11.5px;height:11.5px;background:#c2c2c2"></div><div style="position:absolute;left:0px;top:165px;width:11.5px;height:11.5px;background:#c5c5c5"></div><div style="position:absolute;left:11px;top:165px;width:11.5px;height:11.5px;background:#cbcbcb"></div><div style="position:absolute;left:0px;top:176px;width:11.5px;height:11.5px;background:#b4b4b4"></div><div style="position:absolute;left:11px;top:176px;width:11.5px;height:11.5px;background:#cdcdcd"></div><div style="position:absolute;left:0px;top:187px;width:11.5px;height:11.5px;background:#b5b5b5"></div><div style="position:absolute;left:11px;top:187px;width:11.5px;height:11.5px;background:#b9b9b9"></div><div style="position:absolute;left:0px;top:198px;width:11.5px;height:11.5px;background:#b8b8b8"></div><div style="position:absolute;left:11px;top:198px;width:11.5px;height:11.5px;background:#ababab"></div><div style="position:absolute;left:0px;top:209px;width:11.5px;height:11.5px;background:#b5b5b5"></div><div style="position:absolute;left:11px;top:209px;width:11.5px;height:11.5px;background:#bebebe"></div><div style="position:absolute;left:0px;top:220px;width:11.5px;height:11.5px;background:#b5b5b5"></div><div style="position:absolute;left:11px;top:220px;width:11.5px;height:11.5px;background:#b2b2b2"></div><div style="position:absolute;left:0px;top:231px;width:11.5px;height:11.5px;background:#cacaca"></div><div style="position:absolute;left:11px;top:231px;width:11.5px;height:11.5px;background:#cacaca"></div><div style="position:absolute;left:0px;top:242px;width:11.5px;height:11.5px;background:#c1c1c1"></div><div style="position:absolute;left:11px;top:242px;width:11.5px;height:11.5px;background:#cacaca"></div><div style="position:absolute;left:0px;top:253px;width:11.5px;height:11.5px;background:#d5d5d5"></div><div style="position:absolute;left:11px;top:253px;width:11.5px;height:11.5px;background:#cdcdcd"></div><div style="position:absolute;left:0px;top:264px;width:11.5px;height:11.5px;background:#b5b5b5"></div><div style="position:absolute;left:11px;top:264px;width:11.5px;height:11.5px;background:#c6c6c6"></div></div>
<div class="abs" style="left:276px;top:278px;width:23px;height:259px;clip-path:polygon(9px 0,14px 0,23px 6px,23px 252px,18px 259px,8px 259px,0 250px,0 6px)"><div style="position:absolute;left:0px;top:0px;width:12px;height:12px;background:#c3c3c3"></div><div style="position:absolute;left:11.5px;top:0px;width:12px;height:12px;background:#d9d9d9"></div><div style="position:absolute;left:0px;top:11.5px;width:12px;height:12px;background:#d6d6d6"></div><div style="position:absolute;left:11.5px;top:11.5px;width:12px;height:12px;background:#bcbcbc"></div><div style="position:absolute;left:0px;top:23px;width:12px;height:12px;background:#cbcbcb"></div><div style="position:absolute;left:11.5px;top:23px;width:12px;height:12px;background:#dadada"></div><div style="position:absolute;left:0px;top:34.5px;width:12px;height:12px;background:#d2d2d2"></div><div style="position:absolute;left:11.5px;top:34.5px;width:12px;height:12px;background:#dcdcdc"></div><div style="position:absolute;left:0px;top:46px;width:12px;height:12px;background:#d9d9d9"></div><div style="position:absolute;left:11.5px;top:46px;width:12px;height:12px;background:#b8b8b8"></div><div style="position:absolute;left:0px;top:57.5px;width:12px;height:12px;background:#dadada"></div><div style="position:absolute;left:11.5px;top:57.5px;width:12px;height:12px;background:#b4b4b4"></div><div style="position:absolute;left:0px;top:69px;width:12px;height:12px;background:#d2d2d2"></div><div style="position:absolute;left:11.5px;top:69px;width:12px;height:12px;background:#c4c4c4"></div><div style="position:absolute;left:0px;top:80.5px;width:12px;height:12px;background:#d7d7d7"></div><div style="position:absolute;left:11.5px;top:80.5px;width:12px;height:12px;background:#c2c2c2"></div><div style="position:absolute;left:0px;top:92px;width:12px;height:12px;background:#c0c0c0"></div><div style="position:absolute;left:11.5px;top:92px;width:12px;height:12px;background:#d2d2d2"></div><div style="position:absolute;left:0px;top:103.5px;width:12px;height:12px;background:#d6d6d6"></div><div style="position:absolute;left:11.5px;top:103.5px;width:12px;height:12px;background:#d7d7d7"></div><div style="position:absolute;left:0px;top:115px;width:12px;height:12px;background:#d2d2d2"></div><div style="position:absolute;left:11.5px;top:115px;width:12px;height:12px;background:#cdcdcd"></div><div style="position:absolute;left:0px;top:126.5px;width:12px;height:12px;background:#dcdcdc"></div><div style="position:absolute;left:11.5px;top:126.5px;width:12px;height:12px;background:#bdbdbd"></div><div style="position:absolute;left:0px;top:138px;width:12px;height:12px;background:#c2c2c2"></div><div style="position:absolute;left:11.5px;top:138px;width:12px;height:12px;background:#dcdcdc"></div><div style="position:absolute;left:0px;top:149.5px;width:12px;height:12px;background:#bdbdbd"></div><div style="position:absolute;left:11.5px;top:149.5px;width:12px;height:12px;background:#d5d5d5"></div><div style="position:absolute;left:0px;top:161px;width:12px;height:12px;background:#cccccc"></div><div style="position:absolute;left:11.5px;top:161px;width:12px;height:12px;background:#b4b4b4"></div><div style="position:absolute;left:0px;top:172.5px;width:12px;height:12px;background:#b8b8b8"></div><div style="position:absolute;left:11.5px;top:172.5px;width:12px;height:12px;background:#bebebe"></div><div style="position:absolute;left:0px;top:184px;width:12px;height:12px;background:#d9d9d9"></div><div style="position:absolute;left:11.5px;top:184px;width:12px;height:12px;background:#b6b6b6"></div><div style="position:absolute;left:0px;top:195.5px;width:12px;height:12px;background:#c7c7c7"></div><div style="position:absolute;left:11.5px;top:195.5px;width:12px;height:12px;background:#b5b5b5"></div><div style="position:absolute;left:0px;top:207px;width:12px;height:12px;background:#c5c5c5"></div><div style="position:absolute;left:11.5px;top:207px;width:12px;height:12px;background:#d2d2d2"></div><div style="position:absolute;left:0px;top:218.5px;width:12px;height:12px;background:#dadada"></div><div style="position:absolute;left:11.5px;top:218.5px;width:12px;height:12px;background:#cccccc"></div><div style="position:absolute;left:0px;top:230px;width:12px;height:12px;background:#cfcfcf"></div><div style="position:absolute;left:11.5px;top:230px;width:12px;height:12px;background:#cdcdcd"></div><div style="position:absolute;left:0px;top:241.5px;width:12px;height:12px;background:#d8d8d8"></div><div style="position:absolute;left:11.5px;top:241.5px;width:12px;height:12px;background:#d0d0d0"></div><div style="position:absolute;left:0px;top:253px;width:12px;height:12px;background:#bcbcbc"></div><div style="position:absolute;left:11.5px;top:253px;width:12px;height:12px;background:#cbcbcb"></div><div style="position:absolute;left:0px;top:264.5px;width:12px;height:12px;background:#bababa"></div><div style="position:absolute;left:11.5px;top:264.5px;width:12px;height:12px;background:#b6b6b6"></div><div style="position:absolute;left:0px;top:276px;width:12px;height:12px;background:#bcbcbc"></div><div style="position:absolute;left:11.5px;top:276px;width:12px;height:12px;background:#d3d3d3"></div><div style="position:absolute;left:0px;top:287.5px;width:12px;height:12px;background:#c1c1c1"></div><div style="position:absolute;left:11.5px;top:287.5px;width:12px;height:12px;background:#c4c4c4"></div></div>
<div class="abs" style="left:372px;top:278px;width:32px;height:262px;clip-path:polygon(13px 0,32px 0,32px 262px,12px 262px,8px 240px,0 230px,0 30px)"><div style="position:absolute;left:0px;top:0px;width:11.2px;height:11.2px;background:#d2d2d2"></div><div style="position:absolute;left:10.7px;top:0px;width:11.2px;height:11.2px;background:#d6d6d6"></div><div style="position:absolute;left:21.4px;top:0px;width:11.2px;height:11.2px;background:#c9c9c9"></div><div style="position:absolute;left:0px;top:10.7px;width:11.2px;height:11.2px;background:#dcdcdc"></div><div style="position:absolute;left:10.7px;top:10.7px;width:11.2px;height:11.2px;background:#e1e1e1"></div><div style="position:absolute;left:21.4px;top:10.7px;width:11.2px;height:11.2px;background:#cccccc"></div><div style="position:absolute;left:0px;top:21.4px;width:11.2px;height:11.2px;background:#c8c8c8"></div><div style="position:absolute;left:10.7px;top:21.4px;width:11.2px;height:11.2px;background:#c7c7c7"></div><div style="position:absolute;left:21.4px;top:21.4px;width:11.2px;height:11.2px;background:#c4c4c4"></div><div style="position:absolute;left:0px;top:32.1px;width:11.2px;height:11.2px;background:#dcdcdc"></div><div style="position:absolute;left:10.7px;top:32.1px;width:11.2px;height:11.2px;background:#e6e6e6"></div><div style="position:absolute;left:21.4px;top:32.1px;width:11.2px;height:11.2px;background:#d5d5d5"></div><div style="position:absolute;left:0px;top:42.8px;width:11.2px;height:11.2px;background:#c6c6c6"></div><div style="position:absolute;left:10.7px;top:42.8px;width:11.2px;height:11.2px;background:#d1d1d1"></div><div style="position:absolute;left:21.4px;top:42.8px;width:11.2px;height:11.2px;background:#e4e4e4"></div><div style="position:absolute;left:0px;top:53.5px;width:11.2px;height:11.2px;background:#e5e5e5"></div><div style="position:absolute;left:10.7px;top:53.5px;width:11.2px;height:11.2px;background:#dadada"></div><div style="position:absolute;left:21.4px;top:53.5px;width:11.2px;height:11.2px;background:#d4d4d4"></div><div style="position:absolute;left:0px;top:64.2px;width:11.2px;height:11.2px;background:#cecece"></div><div style="position:absolute;left:10.7px;top:64.2px;width:11.2px;height:11.2px;background:#c9c9c9"></div><div style="position:absolute;left:21.4px;top:64.2px;width:11.2px;height:11.2px;background:#d3d3d3"></div><div style="position:absolute;left:0px;top:74.9px;width:11.2px;height:11.2px;background:#d0d0d0"></div><div style="position:absolute;left:10.7px;top:74.9px;width:11.2px;height:11.2px;background:#c4c4c4"></div><div style="position:absolute;left:21.4px;top:74.9px;width:11.2px;height:11.2px;background:#d3d3d3"></div><div style="position:absolute;left:0px;top:85.6px;width:11.2px;height:11.2px;background:#d4d4d4"></div><div style="position:absolute;left:10.7px;top:85.6px;width:11.2px;height:11.2px;background:#cfcfcf"></div><div style="position:absolute;left:21.4px;top:85.6px;width:11.2px;height:11.2px;background:#cdcdcd"></div><div style="position:absolute;left:0px;top:96.3px;width:11.2px;height:11.2px;background:#d6d6d6"></div><div style="position:absolute;left:10.7px;top:96.3px;width:11.2px;height:11.2px;background:#d5d5d5"></div><div style="position:absolute;left:21.4px;top:96.3px;width:11.2px;height:11.2px;background:#dadada"></div><div style="position:absolute;left:0px;top:107px;width:11.2px;height:11.2px;background:#c8c8c8"></div><div style="position:absolute;left:10.7px;top:107px;width:11.2px;height:11.2px;background:#d8d8d8"></div><div style="position:absolute;left:21.4px;top:107px;width:11.2px;height:11.2px;background:#dbdbdb"></div><div style="position:absolute;left:0px;top:117.7px;width:11.2px;height:11.2px;background:#e3e3e3"></div><div style="position:absolute;left:10.7px;top:117.7px;width:11.2px;height:11.2px;background:#d2d2d2"></div><div style="position:absolute;left:21.4px;top:117.7px;width:11.2px;height:11.2px;background:#cecece"></div><div style="position:absolute;left:0px;top:128.4px;width:11.2px;height:11.2px;background:#d2d2d2"></div><div style="position:absolute;left:10.7px;top:128.4px;width:11.2px;height:11.2px;background:#e1e1e1"></div><div style="position:absolute;left:21.4px;top:128.4px;width:11.2px;height:11.2px;background:#d4d4d4"></div><div style="position:absolute;left:0px;top:139.1px;width:11.2px;height:11.2px;background:#c8c8c8"></div><div style="position:absolute;left:10.7px;top:139.1px;width:11.2px;height:11.2px;background:#e6e6e6"></div><div style="position:absolute;left:21.4px;top:139.1px;width:11.2px;height:11.2px;background:#d6d6d6"></div><div style="position:absolute;left:0px;top:149.8px;width:11.2px;height:11.2px;background:#c3c3c3"></div><div style="position:absolute;left:10.7px;top:149.8px;width:11.2px;height:11.2px;background:#d5d5d5"></div><div style="position:absolute;left:21.4px;top:149.8px;width:11.2px;height:11.2px;background:#e7e7e7"></div><div style="position:absolute;left:0px;top:160.5px;width:11.2px;height:11.2px;background:#d6d6d6"></div><div style="position:absolute;left:10.7px;top:160.5px;width:11.2px;height:11.2px;background:#e3e3e3"></div><div style="position:absolute;left:21.4px;top:160.5px;width:11.2px;height:11.2px;background:#cfcfcf"></div><div style="position:absolute;left:0px;top:171.2px;width:11.2px;height:11.2px;background:#dddddd"></div><div style="position:absolute;left:10.7px;top:171.2px;width:11.2px;height:11.2px;background:#dedede"></div><div style="position:absolute;left:21.4px;top:171.2px;width:11.2px;height:11.2px;background:#d5d5d5"></div><div style="position:absolute;left:0px;top:181.9px;width:11.2px;height:11.2px;background:#dedede"></div><div style="position:absolute;left:10.7px;top:181.9px;width:11.2px;height:11.2px;background:#dfdfdf"></div><div style="position:absolute;left:21.4px;top:181.9px;width:11.2px;height:11.2px;background:#cdcdcd"></div><div style="position:absolute;left:0px;top:192.6px;width:11.2px;height:11.2px;background:#d1d1d1"></div><div style="position:absolute;left:10.7px;top:192.6px;width:11.2px;height:11.2px;background:#d6d6d6"></div><div style="position:absolute;left:21.4px;top:192.6px;width:11.2px;height:11.2px;background:#d3d3d3"></div><div style="position:absolute;left:0px;top:203.3px;width:11.2px;height:11.2px;background:#c5c5c5"></div><div style="position:absolute;left:10.7px;top:203.3px;width:11.2px;height:11.2px;background:#c8c8c8"></div><div style="position:absolute;left:21.4px;top:203.3px;width:11.2px;height:11.2px;background:#c5c5c5"></div><div style="position:absolute;left:0px;top:214px;width:11.2px;height:11.2px;background:#e0e0e0"></div><div style="position:absolute;left:10.7px;top:214px;width:11.2px;height:11.2px;background:#d4d4d4"></div><div style="position:absolute;left:21.4px;top:214px;width:11.2px;height:11.2px;background:#e4e4e4"></div><div style="position:absolute;left:0px;top:224.7px;width:11.2px;height:11.2px;background:#e5e5e5"></div><div style="position:absolute;left:10.7px;top:224.7px;width:11.2px;height:11.2px;background:#e1e1e1"></div><div style="position:absolute;left:21.4px;top:224.7px;width:11.2px;height:11.2px;background:#d8d8d8"></div><div style="position:absolute;left:0px;top:235.4px;width:11.2px;height:11.2px;background:#cccccc"></div><div style="position:absolute;left:10.7px;top:235.4px;width:11.2px;height:11.2px;background:#cfcfcf"></div><div style="position:absolute;left:21.4px;top:235.4px;width:11.2px;height:11.2px;background:#c7c7c7"></div><div style="position:absolute;left:0px;top:246.1px;width:11.2px;height:11.2px;background:#dddddd"></div><div style="position:absolute;left:10.7px;top:246.1px;width:11.2px;height:11.2px;background:#cfcfcf"></div><div style="position:absolute;left:21.4px;top:246.1px;width:11.2px;height:11.2px;background:#dfdfdf"></div><div style="position:absolute;left:0px;top:256.8px;width:11.2px;height:11.2px;background:#d4d4d4"></div><div style="position:absolute;left:10.7px;top:256.8px;width:11.2px;height:11.2px;background:#cecece"></div><div style="position:absolute;left:21.4px;top:256.8px;width:11.2px;height:11.2px;background:#d9d9d9"></div><div style="position:absolute;left:0px;top:267.5px;width:11.2px;height:11.2px;background:#dedede"></div><div style="position:absolute;left:10.7px;top:267.5px;width:11.2px;height:11.2px;background:#e8e8e8"></div><div style="position:absolute;left:21.4px;top:267.5px;width:11.2px;height:11.2px;background:#d7d7d7"></div><div style="position:absolute;left:0px;top:278.2px;width:11.2px;height:11.2px;background:#e6e6e6"></div><div style="position:absolute;left:10.7px;top:278.2px;width:11.2px;height:11.2px;background:#cfcfcf"></div><div style="position:absolute;left:21.4px;top:278.2px;width:11.2px;height:11.2px;background:#d7d7d7"></div></div>
<div class="abs" style="left:797px;top:300px;width:25px;height:237px;clip-path:polygon(0 0,23px 0,23px 12px,25px 12px,25px 237px,0 237px)"><div style="position:absolute;left:0px;top:0px;width:12.1px;height:12.1px;background:#a8a8a8"></div><div style="position:absolute;left:11.6px;top:0px;width:12.1px;height:12.1px;background:#b0b0b0"></div><div style="position:absolute;left:23.2px;top:0px;width:12.1px;height:12.1px;background:#b0b0b0"></div><div style="position:absolute;left:0px;top:11.6px;width:12.1px;height:12.1px;background:#dadada"></div><div style="position:absolute;left:11.6px;top:11.6px;width:12.1px;height:12.1px;background:#bababa"></div><div style="position:absolute;left:23.2px;top:11.6px;width:12.1px;height:12.1px;background:#d6d6d6"></div><div style="position:absolute;left:0px;top:23.2px;width:12.1px;height:12.1px;background:#c8c8c8"></div><div style="position:absolute;left:11.6px;top:23.2px;width:12.1px;height:12.1px;background:#bcbcbc"></div><div style="position:absolute;left:23.2px;top:23.2px;width:12.1px;height:12.1px;background:#c3c3c3"></div><div style="position:absolute;left:0px;top:34.8px;width:12.1px;height:12.1px;background:#c0c0c0"></div><div style="position:absolute;left:11.6px;top:34.8px;width:12.1px;height:12.1px;background:#d0d0d0"></div><div style="position:absolute;left:23.2px;top:34.8px;width:12.1px;height:12.1px;background:#d7d7d7"></div><div style="position:absolute;left:0px;top:46.4px;width:12.1px;height:12.1px;background:#c8c8c8"></div><div style="position:absolute;left:11.6px;top:46.4px;width:12.1px;height:12.1px;background:#d1d1d1"></div><div style="position:absolute;left:23.2px;top:46.4px;width:12.1px;height:12.1px;background:#dbdbdb"></div><div style="position:absolute;left:0px;top:58px;width:12.1px;height:12.1px;background:#bfbfbf"></div><div style="position:absolute;left:11.6px;top:58px;width:12.1px;height:12.1px;background:#dddddd"></div><div style="position:absolute;left:23.2px;top:58px;width:12.1px;height:12.1px;background:#c8c8c8"></div><div style="position:absolute;left:0px;top:69.6px;width:12.1px;height:12.1px;background:#b9b9b9"></div><div style="position:absolute;left:11.6px;top:69.6px;width:12.1px;height:12.1px;background:#c6c6c6"></div><div style="position:absolute;left:23.2px;top:69.6px;width:12.1px;height:12.1px;background:#d3d3d3"></div><div style="position:absolute;left:0px;top:81.2px;width:12.1px;height:12.1px;background:#cacaca"></div><div style="position:absolute;left:11.6px;top:81.2px;width:12.1px;height:12.1px;background:#c4c4c4"></div><div style="position:absolute;left:23.2px;top:81.2px;width:12.1px;height:12.1px;background:#d1d1d1"></div><div style="position:absolute;left:0px;top:92.8px;width:12.1px;height:12.1px;background:#c3c3c3"></div><div style="position:absolute;left:11.6px;top:92.8px;width:12.1px;height:12.1px;background:#bdbdbd"></div><div style="position:absolute;left:23.2px;top:92.8px;width:12.1px;height:12.1px;background:#c1c1c1"></div><div style="position:absolute;left:0px;top:104.4px;width:12.1px;height:12.1px;background:#e0e0e0"></div><div style="position:absolute;left:11.6px;top:104.4px;width:12.1px;height:12.1px;background:#e0e0e0"></div><div style="position:absolute;left:23.2px;top:104.4px;width:12.1px;height:12.1px;background:#d5d5d5"></div><div style="position:absolute;left:0px;top:116px;width:12.1px;height:12.1px;background:#c1c1c1"></div><div style="position:absolute;left:11.6px;top:116px;width:12.1px;height:12.1px;background:#c1c1c1"></div><div style="position:absolute;left:23.2px;top:116px;width:12.1px;height:12.1px;background:#b9b9b9"></div><div style="position:absolute;left:0px;top:127.6px;width:12.1px;height:12.1px;background:#b9b9b9"></div><div style="position:absolute;left:11.6px;top:127.6px;width:12.1px;height:12.1px;background:#c6c6c6"></div><div style="position:absolute;left:23.2px;top:127.6px;width:12.1px;height:12.1px;background:#c6c6c6"></div><div style="position:absolute;left:0px;top:139.2px;width:12.1px;height:12.1px;background:#c3c3c3"></div><div style="position:absolute;left:11.6px;top:139.2px;width:12.1px;height:12.1px;background:#c3c3c3"></div><div style="position:absolute;left:23.2px;top:139.2px;width:12.1px;height:12.1px;background:#cbcbcb"></div><div style="position:absolute;left:0px;top:150.8px;width:12.1px;height:12.1px;background:#cdcdcd"></div><div style="position:absolute;left:11.6px;top:150.8px;width:12.1px;height:12.1px;background:#c5c5c5"></div><div style="position:absolute;left:23.2px;top:150.8px;width:12.1px;height:12.1px;background:#dbdbdb"></div><div style="position:absolute;left:0px;top:162.4px;width:12.1px;height:12.1px;background:#e1e1e1"></div><div style="position:absolute;left:11.6px;top:162.4px;width:12.1px;height:12.1px;background:#c6c6c6"></div><div style="position:absolute;left:23.2px;top:162.4px;width:12.1px;height:12.1px;background:#c4c4c4"></div><div style="position:absolute;left:0px;top:174px;width:12.1px;height:12.1px;background:#c5c5c5"></div><div style="position:absolute;left:11.6px;top:174px;width:12.1px;height:12.1px;background:#d1d1d1"></div><div style="position:absolute;left:23.2px;top:174px;width:12.1px;height:12.1px;background:#cccccc"></div><div style="position:absolute;left:0px;top:185.6px;width:12.1px;height:12.1px;background:#bababa"></div><div style="position:absolute;left:11.6px;top:185.6px;width:12.1px;height:12.1px;background:#d0d0d0"></div><div style="position:absolute;left:23.2px;top:185.6px;width:12.1px;height:12.1px;background:#d3d3d3"></div><div style="position:absolute;left:0px;top:197.2px;width:12.1px;height:12.1px;background:#c3c3c3"></div><div style="position:absolute;left:11.6px;top:197.2px;width:12.1px;height:12.1px;background:#c2c2c2"></div><div style="position:absolute;left:23.2px;top:197.2px;width:12.1px;height:12.1px;background:#c9c9c9"></div><div style="position:absolute;left:0px;top:208.8px;width:12.1px;height:12.1px;background:#bdbdbd"></div><div style="position:absolute;left:11.6px;top:208.8px;width:12.1px;height:12.1px;background:#cecece"></div><div style="position:absolute;left:23.2px;top:208.8px;width:12.1px;height:12.1px;background:#cccccc"></div><div style="position:absolute;left:0px;top:220.4px;width:12.1px;height:12.1px;background:#dfdfdf"></div><div style="position:absolute;left:11.6px;top:220.4px;width:12.1px;height:12.1px;background:#dedede"></div><div style="position:absolute;left:23.2px;top:220.4px;width:12.1px;height:12.1px;background:#b9b9b9"></div><div style="position:absolute;left:0px;top:232px;width:12.1px;height:12.1px;background:#dfdfdf"></div><div style="position:absolute;left:11.6px;top:232px;width:12.1px;height:12.1px;background:#cecece"></div><div style="position:absolute;left:23.2px;top:232px;width:12.1px;height:12.1px;background:#bdbdbd"></div></div>
<div class="abs" style="left:56px;top:421px;width:23px;height:11px;background:#8dbbe6"></div>
<div class="abs" style="left:56px;top:432px;width:23px;height:11px;background:#3f92e2"></div>
<div class="abs" style="left:155px;top:421px;width:23px;height:11px;background:#8dbbe6"></div>
<div class="abs" style="left:155px;top:432px;width:23px;height:11px;background:#3f92e2"></div>
<div class="abs" style="left:271px;top:421px;width:28px;height:11px;background:#8dbbe6"></div>
<div class="abs" style="left:271px;top:432px;width:28px;height:11px;background:#3f92e2"></div>
<div class="abs" style="left:372px;top:421px;width:32px;height:11px;background:#8dbbe6"></div>
<div class="abs" style="left:372px;top:432px;width:32px;height:11px;background:#3f92e2"></div>
<div class="abs" style="left:797px;top:421px;width:25px;height:11px;background:#8dbbe6"></div>
<div class="abs" style="left:797px;top:432px;width:25px;height:11px;background:#3f92e2"></div>
<div class="abs" style="left:384.1px;top:83.3px;width:53px;height:140px;clip-path:polygon(5.6px 27px,8px 12px,16px 5.7px,31px 5.7px,44px 10px,51px 17px,51px 86px,49px 96px,43px 98px,43px 122px,36px 132px,21px 139px,16px 132px,5.6px 132px)"><div style="position:absolute;left:0px;top:0px;width:12.9px;height:12.9px;background:#f4f4f4"></div><div style="position:absolute;left:12.4px;top:0px;width:12.9px;height:12.9px;background:#e8e8e8"></div><div style="position:absolute;left:24.8px;top:0px;width:12.9px;height:12.9px;background:#e0e0e0"></div><div style="position:absolute;left:37.2px;top:0px;width:12.9px;height:12.9px;background:#f0f0f0"></div><div style="position:absolute;left:0px;top:12.4px;width:12.9px;height:12.9px;background:#f0f0f0"></div><div style="position:absolute;left:12.4px;top:12.4px;width:12.9px;height:12.9px;background:#a8a8a8"></div><div style="position:absolute;left:24.8px;top:12.4px;width:12.9px;height:12.9px;background:#a8a8a8"></div><div style="position:absolute;left:37.2px;top:12.4px;width:12.9px;height:12.9px;background:#c0c0c0"></div><div style="position:absolute;left:0px;top:24.8px;width:12.9px;height:12.9px;background:#f4f4f4"></div><div style="position:absolute;left:12.4px;top:24.8px;width:12.9px;height:12.9px;background:#d0d0d0"></div><div style="position:absolute;left:24.8px;top:24.8px;width:12.9px;height:12.9px;background:#e8e8e8"></div><div style="position:absolute;left:37.2px;top:24.8px;width:12.9px;height:12.9px;background:#f8f8f8"></div><div style="position:absolute;left:0px;top:37.2px;width:12.9px;height:12.9px;background:#e8e8e8"></div><div style="position:absolute;left:12.4px;top:37.2px;width:12.9px;height:12.9px;background:#c8c8c8"></div><div style="position:absolute;left:24.8px;top:37.2px;width:12.9px;height:12.9px;background:#f0f0f0"></div><div style="position:absolute;left:37.2px;top:37.2px;width:12.9px;height:12.9px;background:#ffffff"></div><div style="position:absolute;left:0px;top:49.6px;width:12.9px;height:12.9px;background:#e0e0e0"></div><div style="position:absolute;left:12.4px;top:49.6px;width:12.9px;height:12.9px;background:#c4c4c4"></div><div style="position:absolute;left:24.8px;top:49.6px;width:12.9px;height:12.9px;background:#a8a8a8"></div><div style="position:absolute;left:37.2px;top:49.6px;width:12.9px;height:12.9px;background:#a4a4a4"></div><div style="position:absolute;left:0px;top:62px;width:12.9px;height:12.9px;background:#e4e4e4"></div><div style="position:absolute;left:12.4px;top:62px;width:12.9px;height:12.9px;background:#b8b8b8"></div><div style="position:absolute;left:24.8px;top:62px;width:12.9px;height:12.9px;background:#b4b4b4"></div><div style="position:absolute;left:37.2px;top:62px;width:12.9px;height:12.9px;background:#c4c4c4"></div><div style="position:absolute;left:0px;top:74.4px;width:12.9px;height:12.9px;background:#e8e8e8"></div><div style="position:absolute;left:12.4px;top:74.4px;width:12.9px;height:12.9px;background:#b8b8b8"></div><div style="position:absolute;left:24.8px;top:74.4px;width:12.9px;height:12.9px;background:#c4c4c4"></div><div style="position:absolute;left:37.2px;top:74.4px;width:12.9px;height:12.9px;background:#c8c8c8"></div><div style="position:absolute;left:0px;top:86.8px;width:12.9px;height:12.9px;background:#d8d8d8"></div><div style="position:absolute;left:12.4px;top:86.8px;width:12.9px;height:12.9px;background:#a0a0a0"></div><div style="position:absolute;left:24.8px;top:86.8px;width:12.9px;height:12.9px;background:#a4a4a4"></div><div style="position:absolute;left:37.2px;top:86.8px;width:12.9px;height:12.9px;background:#a8a8a8"></div><div style="position:absolute;left:0px;top:99.2px;width:12.9px;height:12.9px;background:#e0e0e0"></div><div style="position:absolute;left:12.4px;top:99.2px;width:12.9px;height:12.9px;background:#c8c8c8"></div><div style="position:absolute;left:24.8px;top:99.2px;width:12.9px;height:12.9px;background:#c8c8c8"></div><div style="position:absolute;left:37.2px;top:99.2px;width:12.9px;height:12.9px;background:#d0d0d0"></div><div style="position:absolute;left:0px;top:111.6px;width:12.9px;height:12.9px;background:#f0f0f0"></div><div style="position:absolute;left:12.4px;top:111.6px;width:12.9px;height:12.9px;background:#d8d8d8"></div><div style="position:absolute;left:24.8px;top:111.6px;width:12.9px;height:12.9px;background:#d8d8d8"></div><div style="position:absolute;left:37.2px;top:111.6px;width:12.9px;height:12.9px;background:#e8e8e8"></div><div style="position:absolute;left:0px;top:124px;width:12.9px;height:12.9px;background:#f0f0f0"></div><div style="position:absolute;left:12.4px;top:124px;width:12.9px;height:12.9px;background:#e0e0e0"></div><div style="position:absolute;left:24.8px;top:124px;width:12.9px;height:12.9px;background:#e4e4e4"></div><div style="position:absolute;left:37.2px;top:124px;width:12.9px;height:12.9px;background:#ececec"></div><div style="position:absolute;left:0px;top:136.4px;width:12.9px;height:12.9px;background:#eeeeee"></div><div style="position:absolute;left:12.4px;top:136.4px;width:12.9px;height:12.9px;background:#e8e8e8"></div><div style="position:absolute;left:24.8px;top:136.4px;width:12.9px;height:12.9px;background:#e8e8e8"></div><div style="position:absolute;left:37.2px;top:136.4px;width:12.9px;height:12.9px;background:#e8e8e8"></div></div>
<div class="abs" style="left:50.5px;top:554px;width:1px;height:16px;background:#8c8c8c"></div>
<div class="abs" style="left:200.5px;top:554px;width:1px;height:16px;background:#8c8c8c"></div>
<div class="abs" style="left:250px;top:554px;width:1px;height:16px;background:#8c8c8c"></div>
<div class="abs" style="left:450px;top:554px;width:1px;height:16px;background:#8c8c8c"></div>
<div class="abs" style="left:510px;top:554px;width:1px;height:16px;background:#8c8c8c"></div>
<div class="abs" style="left:660px;top:554px;width:1px;height:16px;background:#8c8c8c"></div>
<div class="abs" style="left:760.5px;top:554px;width:1px;height:16px;background:#8c8c8c"></div>
<div class="t" style="left:4px;top:554px;font-size:12px;color:#9c9c9c">状态</div>
<div class="t" style="left:56px;top:554px;font-size:12px;color:#9c9c9c">群采集完毕</div>
<div class="t" style="left:206px;top:554px;font-size:12px;color:#9c9c9c">群名称</div>
<div class="t" style="left:256px;top:554px;font-size:12px;color:#9c9c9c">茴閱宏串—分享<span class="m">&nbsp;</span>的群聊</div>
<div class="t" style="left:456px;top:554px;font-size:12px;color:#9c9c9c">用户昵称</div>
<div class="t" style="left:667px;top:554px;font-size:12px;color:#9c9c9c">正在监控的群</div>
</body></html>
